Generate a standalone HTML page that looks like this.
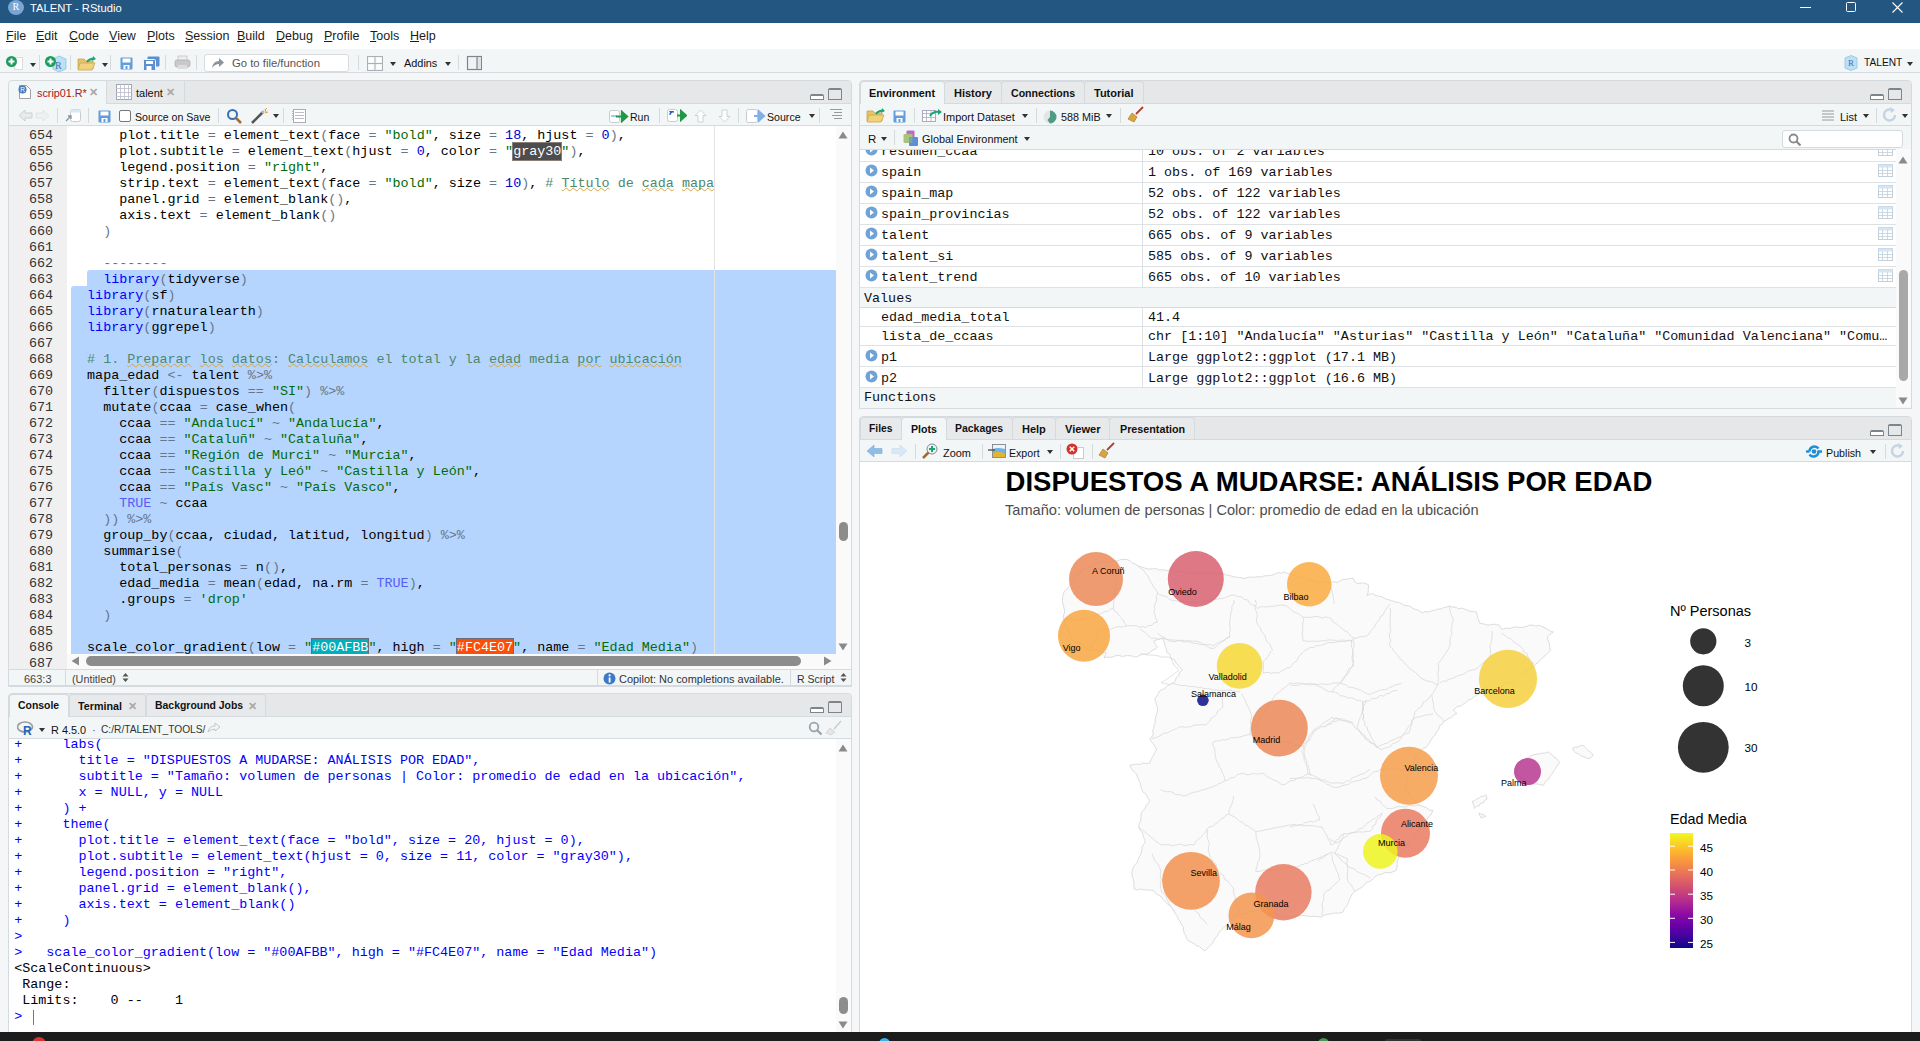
<!DOCTYPE html><html><head><meta charset="utf-8"><style>
*{margin:0;padding:0;box-sizing:border-box}
html,body{width:1920px;height:1041px;overflow:hidden;background:#f4f6f7;font-family:"Liberation Sans",sans-serif;font-size:12px;color:#222}
.a{position:absolute}
.t{position:absolute;white-space:pre;line-height:1}
.m{font-family:"Liberation Mono",monospace;font-size:13.4px}
.ln{position:absolute;white-space:pre;height:16px;line-height:16px;margin-top:2px;font-family:"Liberation Mono",monospace;font-size:13.4px}
.sep{position:absolute;width:1px;background:#d4dadd}
.car{position:absolute;width:0;height:0;border-left:3.5px solid transparent;border-right:3.5px solid transparent;border-top:4px solid #333}
.tab{position:absolute;top:0;height:23px;border:1px solid #d6dadc;border-bottom:none;border-radius:4px 4px 0 0;background:#e8e9eb;font-weight:bold;font-size:12px;line-height:22px;padding-left:9px;color:#111}
.tab.act{background:#f2f6f7}
.x{color:#a8a8a8;font-weight:bold;font-size:11px}
</style></head><body>
<div class="a" style="left:0;top:0;width:1920px;height:23px;background:#235680"></div>
<div class="a" style="left:8px;top:0px;width:16px;height:15px;border-radius:50%;background:#79a6d5"></div>
<div class="t" style="left:12.5px;top:2px;font-family:'Liberation Serif',serif;font-size:10px;color:#fff">R</div>
<div class="t" style="left:30px;top:2.5px;font-size:11.2px;color:#fff">TALENT - RStudio</div>
<div class="a" style="left:1800px;top:7px;width:11px;height:1px;background:#fff"></div>
<div class="a" style="left:1846px;top:2px;width:10px;height:10px;border:1px solid #fff;border-radius:1.5px"></div>
<svg class="a" style="left:1891.5px;top:2px" width="11" height="11"><path d="M0.5 0.5L10.5 10.5M10.5 0.5L0.5 10.5" stroke="#fff" stroke-width="1.1"/></svg>
<div class="a" style="left:0;top:23px;width:1920px;height:26px;background:#fff"></div>
<div class="t" style="left:6px;top:30px;font-size:12.5px;color:#1b1b1b"><u style="text-underline-offset:1px">F</u>ile</div>
<div class="t" style="left:36px;top:30px;font-size:12.5px;color:#1b1b1b"><u style="text-underline-offset:1px">E</u>dit</div>
<div class="t" style="left:69px;top:30px;font-size:12.5px;color:#1b1b1b"><u style="text-underline-offset:1px">C</u>ode</div>
<div class="t" style="left:109px;top:30px;font-size:12.5px;color:#1b1b1b"><u style="text-underline-offset:1px">V</u>iew</div>
<div class="t" style="left:147px;top:30px;font-size:12.5px;color:#1b1b1b"><u style="text-underline-offset:1px">P</u>lots</div>
<div class="t" style="left:185px;top:30px;font-size:12.5px;color:#1b1b1b"><u style="text-underline-offset:1px">S</u>ession</div>
<div class="t" style="left:237px;top:30px;font-size:12.5px;color:#1b1b1b"><u style="text-underline-offset:1px">B</u>uild</div>
<div class="t" style="left:276px;top:30px;font-size:12.5px;color:#1b1b1b"><u style="text-underline-offset:1px">D</u>ebug</div>
<div class="t" style="left:324px;top:30px;font-size:12.5px;color:#1b1b1b"><u style="text-underline-offset:1px">P</u>rofile</div>
<div class="t" style="left:370px;top:30px;font-size:12.5px;color:#1b1b1b"><u style="text-underline-offset:1px">T</u>ools</div>
<div class="t" style="left:410px;top:30px;font-size:12.5px;color:#1b1b1b"><u style="text-underline-offset:1px">H</u>elp</div>
<div class="a" style="left:0;top:49px;width:1920px;height:23px;background:#f3f6f7"></div>
<div class="a" style="left:0;top:72px;width:1920px;height:1px;background:#d4dadd"></div>
<svg class="a" style="left:6px;top:55px;" width="18" height="16" viewBox="0 0 18 16"><rect x="8.5" y="2.5" width="8" height="12" fill="#fff" stroke="#ddd"/><circle cx="5.5" cy="6.5" r="5.5" fill="#1a9e5c"/><path d="M2.5 6.5H8.5M5.5 3.5V9.5" stroke="#fff" stroke-width="2"/></svg>
<div class="car" style="left:30px;top:63px;border-top-color:#333"></div>
<div class="sep" style="left:39px;top:55px;height:15px"></div>
<svg class="a" style="left:45px;top:55px;" width="22" height="17" viewBox="0 0 22 17"><path d="M8 4l6-3 7 3v10l-7 3-6-3z" fill="#bfe0f2" stroke="#7cc0e4" stroke-width="0.7"/><text x="10" y="14" font-family="Liberation Serif" font-size="10" fill="#3b73b9">R</text><circle cx="5.5" cy="6.5" r="5.5" fill="#1a9e5c"/><path d="M2.5 6.5H8.5M5.5 3.5V9.5" stroke="#fff" stroke-width="2"/></svg>
<div class="sep" style="left:70px;top:55px;height:15px"></div>
<svg class="a" style="left:77px;top:55px;" width="20" height="16" viewBox="0 0 20 16"><path d="M1 4h6l2 2h7v8H1z" fill="#e3c46a" stroke="#c9a646" stroke-width="0.8"/><path d="M3 8h15l-3 7H1z" fill="#f0d27c" stroke="#c9a646" stroke-width="0.8"/><path d="M10 7q3-4 7-3" stroke="#1aa575" stroke-width="2" fill="none"/><path d="M16 1l3 3-4 2z" fill="#1aa575"/></svg>
<div class="car" style="left:102px;top:63px;border-top-color:#333"></div>
<div class="sep" style="left:110px;top:55px;height:15px"></div>
<svg class="a" style="left:120px;top:57px;" width="13" height="13" viewBox="0 0 13 13"><rect x="0.5" y="0.5" width="12" height="12" rx="1" fill="#639cdc"/><rect x="2.5" y="1.5" width="8" height="4" fill="#fff"/><rect x="3.5" y="8" width="6" height="4" fill="#fff"/><rect x="5.5" y="9" width="2" height="3" fill="#639cdc"/></svg>
<svg class="a" style="left:143px;top:56px;" width="17" height="15" viewBox="0 0 17 15"><rect x="4.5" y="0.5" width="12" height="10" rx="1" fill="#5b8fd0"/><rect x="0.5" y="3.5" width="12" height="11" rx="1" fill="#5b8fd0" stroke="#f4f6f7" stroke-width="1"/><rect x="3" y="5" width="7" height="3" fill="#fff"/><rect x="3.5" y="10" width="5" height="4" fill="#fff"/></svg>
<div class="sep" style="left:165px;top:55px;height:15px"></div>
<svg class="a" style="left:174px;top:55px;" width="17" height="15" viewBox="0 0 17 15"><rect x="4" y="1" width="9" height="5" fill="#eee" stroke="#bbb" stroke-width="0.7"/><rect x="1" y="5" width="15" height="7" rx="2" fill="#c9c9c9" stroke="#aaa" stroke-width="0.7"/><rect x="4" y="10" width="9" height="4" fill="#ddd"/></svg>
<div class="sep" style="left:196px;top:55px;height:15px"></div>
<div class="a" style="left:204px;top:54px;width:145px;height:18px;background:#fff;border:1px solid #d8dcdf;border-radius:3px"></div>
<svg class="a" style="left:211px;top:57px;" width="14" height="12" viewBox="0 0 14 12"><path d="M1 11q1-7 7-7V1l5 4.5-5 4.5V7q-4 0-7 4z" fill="#8a949c"/></svg>
<div class="t" style="left:232px;top:57.5px;font-size:11.3px;color:#555">Go to file/function</div>
<div class="sep" style="left:358px;top:55px;height:15px"></div>
<svg class="a" style="left:367px;top:56px;" width="16" height="15" viewBox="0 0 16 15"><rect x="0.5" y="0.5" width="15" height="14" fill="none" stroke="#aab0b5"/><path d="M8 0.5V14.5M0.5 7.5H15.5" stroke="#aab0b5"/><rect x="2" y="2" width="4.5" height="4" fill="#fff"/><rect x="9.5" y="2" width="4.5" height="4" fill="#fff"/><rect x="2" y="9" width="4.5" height="4" fill="#fff"/><rect x="9.5" y="9" width="4.5" height="4" fill="#fff"/></svg>
<div class="car" style="left:390px;top:62px;border-top-color:#333"></div>
<div class="t" style="left:404px;top:57.5px;font-size:10.9px;color:#111">Addins</div>
<div class="car" style="left:445px;top:62px;border-top-color:#333"></div>
<div class="sep" style="left:458px;top:55px;height:15px"></div>
<svg class="a" style="left:466px;top:55px;" width="16" height="16" viewBox="0 0 16 16"><rect x="1.5" y="1.5" width="14" height="13" fill="#f0f2f4" stroke="#7d858b" stroke-width="1.2"/><rect x="11" y="2" width="4" height="12" fill="#dfe3e6"/><path d="M11 1.5V14.5" stroke="#7d858b" stroke-width="1.2"/></svg>
<svg class="a" style="left:1843px;top:55px;" width="16" height="16" viewBox="0 0 16 16"><path d="M2 3l6-2.5 6 2.5v10l-6 2.5-6-2.5z" fill="#bfe0f2" stroke="#7cc0e4" stroke-width="0.7"/><text x="5" y="11" font-family="Liberation Serif" font-size="9" fill="#3b73b9">R</text></svg>
<div class="t" style="left:1864px;top:57.5px;font-size:10.2px;color:#111">TALENT</div>
<div class="car" style="left:1907px;top:62px;border-top-color:#333"></div>
<div class="a" style="left:8px;top:80px;width:844px;height:607px;border:1px solid #d4dadd;border-radius:4px 4px 0 0;background:#f2f6f7"></div>
<div class="a" style="left:9px;top:81px;width:842px;height:23px;background:#e5e7e9;border-radius:4px 4px 0 0"></div>
<div class="a" style="left:9px;top:103px;width:842px;height:1px;background:#d4dadd"></div>
<div class="a" style="left:9px;top:81px;width:98px;height:23px;background:#f2f6f7;border-right:1px solid #d4dadd;border-radius:4px 0 0 0"></div>
<svg class="a" style="left:17px;top:84px;" width="16" height="16" viewBox="0 0 16 16"><path d="M2.5 1.5h7l4 4v9h-11z" fill="#fff" stroke="#8a8a8a" stroke-width="0.8"/><circle cx="5.5" cy="5.5" r="4" fill="#4a78b8"/><text x="3.3" y="8.3" font-family="Liberation Sans" font-size="6.5" fill="#fff">R</text></svg>
<div class="t" style="left:37px;top:88px;font-size:10.8px;color:#a8141b">scrip01.R*</div>
<div class="t x" style="left:89px;top:87px">&#x2715;</div>
<div class="a" style="left:107px;top:81px;width:78px;height:22px;background:#e8e9eb;border-right:1px solid #d4dadd"></div>
<svg class="a" style="left:116px;top:84px;" width="16" height="16" viewBox="0 0 16 16"><rect x="0.5" y="0.5" width="15" height="15" fill="#fff" stroke="#9aa"/><path d="M0 4.5H16M0 8.5H16M0 12.5H16M4.5 0V16M8.5 0V16M12.5 0V16" stroke="#bbc" stroke-width="0.8"/></svg>
<div class="t" style="left:136px;top:88px;font-size:11px;color:#111">talent</div>
<div class="t x" style="left:166px;top:87px">&#x2715;</div>
<div class="a" style="left:810px;top:94px;width:14px;height:6px;border:1.5px solid #7d858b;border-top-width:2.5px;border-radius:2px 2px 0 0;background:#fff"></div>
<div class="a" style="left:828px;top:88px;width:14px;height:12px;border:1.2px solid #7d858b;border-top-width:2.5px;border-radius:2px 2px 0 0"></div>
<div class="a" style="left:9px;top:125px;width:842px;height:1px;background:#d4dadd"></div>
<svg class="a" style="left:18px;top:109px;" width="32" height="13" viewBox="0 0 32 13"><path d="M1 6.5L7 1v3h7v5H7v3z" fill="#e8eaec" stroke="#c4c8cc" stroke-width="0.8"/><path d="M31 6.5L25 1v3h-7v5h7v3z" fill="#eef0f2" stroke="#dde0e3" stroke-width="0.8"/></svg>
<div class="sep" style="left:57px;top:108px;height:15px"></div>
<svg class="a" style="left:65px;top:109px;" width="16" height="14" viewBox="0 0 16 14"><rect x="5.5" y="0.5" width="10" height="12" rx="2" fill="#fff" stroke="#c8ccd0"/><rect x="5.5" y="0.5" width="10" height="3" fill="#d9e8f5"/><path d="M1 12l5-5M3 7h3v3" stroke="#8a949c" stroke-width="1.3" fill="none"/></svg>
<div class="sep" style="left:88px;top:108px;height:15px"></div>
<svg class="a" style="left:98px;top:110px;" width="13" height="13" viewBox="0 0 13 13"><rect x="0.5" y="0.5" width="12" height="12" rx="1" fill="#639cdc"/><rect x="2.5" y="1.5" width="8" height="4" fill="#fff"/><rect x="3.5" y="8" width="6" height="4" fill="#fff"/><rect x="5.5" y="9" width="2" height="3" fill="#639cdc"/></svg>
<div class="a" style="left:119px;top:110px;width:12px;height:12px;border:1px solid #777;border-radius:2px;background:#fff"></div>
<div class="t" style="left:135px;top:111.5px;font-size:10.6px;color:#111">Source on Save</div>
<div class="sep" style="left:218px;top:108px;height:15px"></div>
<svg class="a" style="left:226px;top:108px;" width="17" height="16" viewBox="0 0 17 16"><circle cx="6.5" cy="6.5" r="4.5" fill="none" stroke="#3d6fb5" stroke-width="2"/><path d="M10 10l5 5" stroke="#a46a2a" stroke-width="2.5"/></svg>
<svg class="a" style="left:250px;top:108px;" width="20" height="16" viewBox="0 0 20 16"><path d="M2 15l11-11" stroke="#555" stroke-width="2.5"/><path d="M12 5l2-2" stroke="#bbb" stroke-width="2.5"/><path d="M15 1l1 3M18 4l-3 1M17 0l-2 2" stroke="#e89a2c" stroke-width="1"/></svg>
<div class="car" style="left:273px;top:114px;border-top-color:#333"></div>
<div class="sep" style="left:283px;top:108px;height:15px"></div>
<svg class="a" style="left:292px;top:109px;" width="14" height="14" viewBox="0 0 14 14"><rect x="1.5" y="0.5" width="12" height="13" fill="#fff" stroke="#aab"/><path d="M3 3.5h9M3 6.5h9M3 9.5h9" stroke="#aab" stroke-width="0.8"/><path d="M0 2v10" stroke="#889" stroke-width="1" stroke-dasharray="1 1"/></svg>
<svg class="a" style="left:609px;top:110px;" width="20" height="13" viewBox="0 0 20 13"><rect x="0.5" y="0.5" width="10" height="12" rx="2" fill="#fff" stroke="#c8ccd0"/><rect x="2" y="5" width="6" height="2" fill="#a8c8ea"/><path d="M7 6.5h7M13 2l5 4.5-5 4.5z" stroke="#1c9a46" stroke-width="2.2" fill="#1c9a46"/></svg>
<div class="t" style="left:630px;top:111.5px;font-size:10.5px;color:#111">Run</div>
<div class="sep" style="left:659px;top:108px;height:15px"></div>
<svg class="a" style="left:667px;top:109px;" width="20" height="13" viewBox="0 0 20 13"><rect x="0.5" y="0.5" width="10" height="12" rx="2" fill="#fff" stroke="#c8ccd0"/><path d="M3 6q0-4 4-3" stroke="#2a5fc0" stroke-width="1.4" fill="none"/><path d="M2 2l2 3 2-3z" fill="#2a5fc0"/><path d="M10 6.5h5M14 2l5 4.5-5 4.5z" stroke="#1c9a46" stroke-width="2" fill="#1c9a46"/></svg>
<svg class="a" style="left:694px;top:109px;" width="13" height="14" viewBox="0 0 13 14"><path d="M6.5 1L12 6.5H9V13H4V6.5H1z" fill="#fff" stroke="#c4c8cc" stroke-width="0.8"/></svg>
<svg class="a" style="left:718px;top:109px;" width="13" height="14" viewBox="0 0 13 14"><path d="M6.5 13L12 7.5H9V1H4v6.5H1z" fill="#fff" stroke="#c4c8cc" stroke-width="0.8"/></svg>
<div class="sep" style="left:738px;top:108px;height:15px"></div>
<svg class="a" style="left:746px;top:109px;" width="20" height="14" viewBox="0 0 20 14"><rect x="0.5" y="0.5" width="11" height="13" rx="2" fill="#fff" stroke="#c8ccd0"/><path d="M8 7h6M13 2.5l5 4.5-5 4.5z" stroke="#7fb0e6" stroke-width="2.2" fill="#7fb0e6"/></svg>
<div class="t" style="left:767px;top:111.5px;font-size:10.6px;color:#111">Source</div>
<div class="car" style="left:809px;top:114px;border-top-color:#333"></div>
<div class="sep" style="left:819px;top:108px;height:15px"></div>
<svg class="a" style="left:830px;top:108px;" width="12" height="12" viewBox="0 0 12 12"><path d="M0 1.5h12M4 4.5h8M2 7.5h10M4 10.5h8" stroke="#999" stroke-width="1"/></svg>
<div class="a" style="left:9px;top:126px;width:58px;height:543px;background:#f0f0f0"></div>
<div class="a" style="left:67px;top:126px;width:769px;height:543px;background:#fff;overflow:hidden">
<div class="a" style="left:20px;top:144px;width:800px;height:16px;background:#b5d5ff;border-radius:3px 0 0 0"></div>
<div class="a" style="left:4px;top:160px;width:800px;height:368px;background:#b5d5ff;border-radius:3px 0 0 0"></div>
<div class="a" style="left:647px;top:0;width:1px;height:528px;background:#e3e3e3"></div>
<div class="ln" style="left:4px;top:0px;color:#000">      <span style="color:#000000">plot.title</span> <span style="color:#687687">=</span> <span style="color:#000000">element_text</span><span style="color:#687687">(</span><span style="color:#000000">face</span> <span style="color:#687687">=</span> <span style="color:#036a07">"bold"</span>, <span style="color:#000000">size</span> <span style="color:#687687">=</span> <span style="color:#0000cd">18</span>, <span style="color:#000000">hjust</span> <span style="color:#687687">=</span> <span style="color:#0000cd">0</span><span style="color:#687687">)</span>,</div>
<div class="ln" style="left:4px;top:16px;color:#000">      <span style="color:#000000">plot.subtitle</span> <span style="color:#687687">=</span> <span style="color:#000000">element_text</span><span style="color:#687687">(</span><span style="color:#000000">hjust</span> <span style="color:#687687">=</span> <span style="color:#0000cd">0</span>, <span style="color:#000000">color</span> <span style="color:#687687">=</span> <span style="color:#036a07">"</span><span style="background:#4d4d4d;color:#fff;box-shadow:0 0 0 1px rgba(40,20,10,.55);padding:1px 0">gray30</span><span style="color:#036a07">"</span><span style="color:#687687">)</span>,</div>
<div class="ln" style="left:4px;top:32px;color:#000">      <span style="color:#000000">legend.position</span> <span style="color:#687687">=</span> <span style="color:#036a07">"right"</span>,</div>
<div class="ln" style="left:4px;top:48px;color:#000">      <span style="color:#000000">strip.text</span> <span style="color:#687687">=</span> <span style="color:#000000">element_text</span><span style="color:#687687">(</span><span style="color:#000000">face</span> <span style="color:#687687">=</span> <span style="color:#036a07">"bold"</span>, <span style="color:#000000">size</span> <span style="color:#687687">=</span> <span style="color:#0000cd">10</span><span style="color:#687687">)</span>, <span style="color:#4c886b"># <span style="text-decoration:underline wavy #d7a442;text-decoration-thickness:1px;text-underline-offset:0px;text-decoration-skip-ink:none">Título</span> de <span style="text-decoration:underline wavy #d7a442;text-decoration-thickness:1px;text-underline-offset:0px;text-decoration-skip-ink:none">cada</span> <span style="text-decoration:underline wavy #d7a442;text-decoration-thickness:1px;text-underline-offset:0px;text-decoration-skip-ink:none">mapa</span></span></div>
<div class="ln" style="left:4px;top:64px;color:#000">      <span style="color:#000000">panel.grid</span> <span style="color:#687687">=</span> <span style="color:#000000">element_blank</span><span style="color:#687687">(</span><span style="color:#687687">)</span>,</div>
<div class="ln" style="left:4px;top:80px;color:#000">      <span style="color:#000000">axis.text</span> <span style="color:#687687">=</span> <span style="color:#000000">element_blank</span><span style="color:#687687">(</span><span style="color:#687687">)</span></div>
<div class="ln" style="left:4px;top:96px;color:#000">    <span style="color:#687687">)</span></div>
<div class="ln" style="left:4px;top:112px;color:#000"></div>
<div class="ln" style="left:4px;top:128px;color:#000">    <span style="color:#687687">--------</span></div>
<div class="ln" style="left:4px;top:144px;color:#000">    <span style="color:#0000ff">library</span><span style="color:#687687">(</span><span style="color:#000000">tidyverse</span><span style="color:#687687">)</span></div>
<div class="ln" style="left:4px;top:160px;color:#000">  <span style="color:#0000ff">library</span><span style="color:#687687">(</span><span style="color:#000000">sf</span><span style="color:#687687">)</span></div>
<div class="ln" style="left:4px;top:176px;color:#000">  <span style="color:#0000ff">library</span><span style="color:#687687">(</span><span style="color:#000000">rnaturalearth</span><span style="color:#687687">)</span></div>
<div class="ln" style="left:4px;top:192px;color:#000">  <span style="color:#0000ff">library</span><span style="color:#687687">(</span><span style="color:#000000">ggrepel</span><span style="color:#687687">)</span></div>
<div class="ln" style="left:4px;top:208px;color:#000"></div>
<div class="ln" style="left:4px;top:224px;color:#000">  <span style="color:#4c886b"># 1. <span style="text-decoration:underline wavy #d7a442;text-decoration-thickness:1px;text-underline-offset:0px;text-decoration-skip-ink:none">Preparar</span> <span style="text-decoration:underline wavy #d7a442;text-decoration-thickness:1px;text-underline-offset:0px;text-decoration-skip-ink:none">los</span> <span style="text-decoration:underline wavy #d7a442;text-decoration-thickness:1px;text-underline-offset:0px;text-decoration-skip-ink:none">datos</span>: <span style="text-decoration:underline wavy #d7a442;text-decoration-thickness:1px;text-underline-offset:0px;text-decoration-skip-ink:none">Calculamos</span> el total y la <span style="text-decoration:underline wavy #d7a442;text-decoration-thickness:1px;text-underline-offset:0px;text-decoration-skip-ink:none">edad</span> media <span style="text-decoration:underline wavy #d7a442;text-decoration-thickness:1px;text-underline-offset:0px;text-decoration-skip-ink:none">por</span> <span style="text-decoration:underline wavy #d7a442;text-decoration-thickness:1px;text-underline-offset:0px;text-decoration-skip-ink:none">ubicación</span></span></div>
<div class="ln" style="left:4px;top:240px;color:#000">  <span style="color:#000000">mapa_edad</span> <span style="color:#687687">&lt;-</span> <span style="color:#000000">talent</span> <span style="color:#687687">%&gt;%</span></div>
<div class="ln" style="left:4px;top:256px;color:#000">    <span style="color:#000000">filter</span><span style="color:#687687">(</span><span style="color:#000000">dispuestos</span> <span style="color:#687687">==</span> <span style="color:#036a07">"SI"</span><span style="color:#687687">)</span> <span style="color:#687687">%&gt;%</span></div>
<div class="ln" style="left:4px;top:272px;color:#000">    <span style="color:#000000">mutate</span><span style="color:#687687">(</span><span style="color:#000000">ccaa</span> <span style="color:#687687">=</span> <span style="color:#000000">case_when</span><span style="color:#687687">(</span></div>
<div class="ln" style="left:4px;top:288px;color:#000">      <span style="color:#000000">ccaa</span> <span style="color:#687687">==</span> <span style="color:#036a07">"Andalucí"</span> <span style="color:#687687">~</span> <span style="color:#036a07">"Andalucía"</span>,</div>
<div class="ln" style="left:4px;top:304px;color:#000">      <span style="color:#000000">ccaa</span> <span style="color:#687687">==</span> <span style="color:#036a07">"Cataluñ"</span> <span style="color:#687687">~</span> <span style="color:#036a07">"Cataluña"</span>,</div>
<div class="ln" style="left:4px;top:320px;color:#000">      <span style="color:#000000">ccaa</span> <span style="color:#687687">==</span> <span style="color:#036a07">"Región de Murci"</span> <span style="color:#687687">~</span> <span style="color:#036a07">"Murcia"</span>,</div>
<div class="ln" style="left:4px;top:336px;color:#000">      <span style="color:#000000">ccaa</span> <span style="color:#687687">==</span> <span style="color:#036a07">"Castilla y Leó"</span> <span style="color:#687687">~</span> <span style="color:#036a07">"Castilla y León"</span>,</div>
<div class="ln" style="left:4px;top:352px;color:#000">      <span style="color:#000000">ccaa</span> <span style="color:#687687">==</span> <span style="color:#036a07">"País Vasc"</span> <span style="color:#687687">~</span> <span style="color:#036a07">"País Vasco"</span>,</div>
<div class="ln" style="left:4px;top:368px;color:#000">      <span style="color:#585cf6">TRUE</span> <span style="color:#687687">~</span> <span style="color:#000000">ccaa</span></div>
<div class="ln" style="left:4px;top:384px;color:#000">    <span style="color:#687687">)</span><span style="color:#687687">)</span> <span style="color:#687687">%&gt;%</span></div>
<div class="ln" style="left:4px;top:400px;color:#000">    <span style="color:#000000">group_by</span><span style="color:#687687">(</span><span style="color:#000000">ccaa</span>, <span style="color:#000000">ciudad</span>, <span style="color:#000000">latitud</span>, <span style="color:#000000">longitud</span><span style="color:#687687">)</span> <span style="color:#687687">%&gt;%</span></div>
<div class="ln" style="left:4px;top:416px;color:#000">    <span style="color:#000000">summarise</span><span style="color:#687687">(</span></div>
<div class="ln" style="left:4px;top:432px;color:#000">      <span style="color:#000000">total_personas</span> <span style="color:#687687">=</span> <span style="color:#000000">n</span><span style="color:#687687">(</span><span style="color:#687687">)</span>,</div>
<div class="ln" style="left:4px;top:448px;color:#000">      <span style="color:#000000">edad_media</span> <span style="color:#687687">=</span> <span style="color:#000000">mean</span><span style="color:#687687">(</span><span style="color:#000000">edad</span>, <span style="color:#000000">na.rm</span> <span style="color:#687687">=</span> <span style="color:#585cf6">TRUE</span><span style="color:#687687">)</span>,</div>
<div class="ln" style="left:4px;top:464px;color:#000">      <span style="color:#000000">.groups</span> <span style="color:#687687">=</span> <span style="color:#036a07">'drop'</span></div>
<div class="ln" style="left:4px;top:480px;color:#000">    <span style="color:#687687">)</span></div>
<div class="ln" style="left:4px;top:496px;color:#000"></div>
<div class="ln" style="left:4px;top:512px;color:#000">  <span style="color:#000000">scale_color_gradient</span><span style="color:#687687">(</span><span style="color:#000000">low</span> <span style="color:#687687">=</span> <span style="color:#036a07">"</span><span style="background:#00afbb;color:#fff;box-shadow:0 0 0 1px rgba(40,20,10,.55);padding:1px 0">#00AFBB</span><span style="color:#036a07">"</span>, <span style="color:#000000">high</span> <span style="color:#687687">=</span> <span style="color:#036a07">"</span><span style="background:#fc4e07;color:#fff;box-shadow:0 0 0 1px rgba(40,20,10,.55);padding:1px 0">#FC4E07</span><span style="color:#036a07">"</span>, <span style="color:#000000">name</span> <span style="color:#687687">=</span> <span style="color:#036a07">"Edad Media"</span><span style="color:#687687">)</span></div>
<div class="ln" style="left:4px;top:528px;color:#000"></div>
</div>
<div class="ln" style="left:0;top:126px;width:53px;text-align:right;color:#333">654</div>
<div class="ln" style="left:0;top:142px;width:53px;text-align:right;color:#333">655</div>
<div class="ln" style="left:0;top:158px;width:53px;text-align:right;color:#333">656</div>
<div class="ln" style="left:0;top:174px;width:53px;text-align:right;color:#333">657</div>
<div class="ln" style="left:0;top:190px;width:53px;text-align:right;color:#333">658</div>
<div class="ln" style="left:0;top:206px;width:53px;text-align:right;color:#333">659</div>
<div class="ln" style="left:0;top:222px;width:53px;text-align:right;color:#333">660</div>
<div class="ln" style="left:0;top:238px;width:53px;text-align:right;color:#333">661</div>
<div class="ln" style="left:0;top:254px;width:53px;text-align:right;color:#333">662</div>
<div class="ln" style="left:0;top:270px;width:53px;text-align:right;color:#333">663</div>
<div class="ln" style="left:0;top:286px;width:53px;text-align:right;color:#333">664</div>
<div class="ln" style="left:0;top:302px;width:53px;text-align:right;color:#333">665</div>
<div class="ln" style="left:0;top:318px;width:53px;text-align:right;color:#333">666</div>
<div class="ln" style="left:0;top:334px;width:53px;text-align:right;color:#333">667</div>
<div class="ln" style="left:0;top:350px;width:53px;text-align:right;color:#333">668</div>
<div class="ln" style="left:0;top:366px;width:53px;text-align:right;color:#333">669</div>
<div class="ln" style="left:0;top:382px;width:53px;text-align:right;color:#333">670</div>
<div class="ln" style="left:0;top:398px;width:53px;text-align:right;color:#333">671</div>
<div class="ln" style="left:0;top:414px;width:53px;text-align:right;color:#333">672</div>
<div class="ln" style="left:0;top:430px;width:53px;text-align:right;color:#333">673</div>
<div class="ln" style="left:0;top:446px;width:53px;text-align:right;color:#333">674</div>
<div class="ln" style="left:0;top:462px;width:53px;text-align:right;color:#333">675</div>
<div class="ln" style="left:0;top:478px;width:53px;text-align:right;color:#333">676</div>
<div class="ln" style="left:0;top:494px;width:53px;text-align:right;color:#333">677</div>
<div class="ln" style="left:0;top:510px;width:53px;text-align:right;color:#333">678</div>
<div class="ln" style="left:0;top:526px;width:53px;text-align:right;color:#333">679</div>
<div class="ln" style="left:0;top:542px;width:53px;text-align:right;color:#333">680</div>
<div class="ln" style="left:0;top:558px;width:53px;text-align:right;color:#333">681</div>
<div class="ln" style="left:0;top:574px;width:53px;text-align:right;color:#333">682</div>
<div class="ln" style="left:0;top:590px;width:53px;text-align:right;color:#333">683</div>
<div class="ln" style="left:0;top:606px;width:53px;text-align:right;color:#333">684</div>
<div class="ln" style="left:0;top:622px;width:53px;text-align:right;color:#333">685</div>
<div class="ln" style="left:0;top:638px;width:53px;text-align:right;color:#333">686</div>
<div class="ln" style="left:0;top:654px;width:53px;text-align:right;color:#333">687</div>
<div class="a" style="left:836px;top:126px;width:15px;height:528px;background:#fafafa"></div>
<svg class="a" style="left:838px;top:131px;" width="10" height="8" viewBox="0 0 10 8"><path d="M0.5 7.5L5 0.5 9.5 7.5z" fill="#8a8a8a"/></svg>
<div class="a" style="left:839px;top:522px;width:9px;height:19px;border-radius:4.5px;background:#8c8c8c"></div>
<svg class="a" style="left:838px;top:643px;" width="10" height="8" viewBox="0 0 10 8"><path d="M0.5 0.5L5 7.5 9.5 0.5z" fill="#8a8a8a"/></svg>
<div class="a" style="left:67px;top:654px;width:784px;height:15px;background:#fafafa"></div>
<svg class="a" style="left:71px;top:656px;" width="9" height="10" viewBox="0 0 9 10"><path d="M8 0.5L0.5 5 8 9.5z" fill="#8a8a8a"/></svg>
<div class="a" style="left:86px;top:656px;width:715px;height:10px;border-radius:5px;background:#8c8c8c"></div>
<svg class="a" style="left:823px;top:656px;" width="9" height="10" viewBox="0 0 9 10"><path d="M1 0.5L8.5 5 1 9.5z" fill="#8a8a8a"/></svg>
<div class="a" style="left:9px;top:669px;width:842px;height:17px;background:#f2f6f7;border-top:1px solid #d4dadd;border-bottom:1px solid #d4dadd"></div>
<div class="t" style="left:24px;top:673.5px;font-size:11px;color:#444">663:3</div>
<div class="sep" style="left:65px;top:670px;height:15px"></div>
<div class="t" style="left:72px;top:673.5px;font-size:10.8px;color:#444">(Untitled)</div>
<svg class="a" style="left:122px;top:672px;" width="7" height="11" viewBox="0 0 7 11"><path d="M0.5 4.5L3.5 1 6.5 4.5zM0.5 6.5L3.5 10 6.5 6.5z" fill="#555"/></svg>
<div class="sep" style="left:597px;top:670px;height:15px"></div>
<svg class="a" style="left:603px;top:672px;" width="13" height="13" viewBox="0 0 13 13"><circle cx="6.5" cy="6.5" r="6" fill="#3e79c4"/><rect x="5.7" y="5.5" width="1.8" height="5" fill="#fff"/><circle cx="6.6" cy="3.4" r="1.1" fill="#fff"/></svg>
<div class="t" style="left:619px;top:673.5px;font-size:10.95px;color:#333">Copilot: No completions available.</div>
<div class="sep" style="left:790px;top:670px;height:15px"></div>
<div class="t" style="left:797px;top:673.5px;font-size:10.5px;color:#333">R Script</div>
<svg class="a" style="left:840px;top:672px;" width="7" height="11" viewBox="0 0 7 11"><path d="M0.5 4.5L3.5 1 6.5 4.5zM0.5 6.5L3.5 10 6.5 6.5z" fill="#555"/></svg>
<div class="a" style="left:8px;top:693px;width:844px;height:340px;border:1px solid #d4dadd;border-radius:4px 4px 0 0;background:#f2f6f7"></div>
<div class="a" style="left:9px;top:694px;width:842px;height:23px;background:#e5e7e9;border-radius:4px 4px 0 0"></div>
<div class="a" style="left:9px;top:716px;width:842px;height:1px;background:#d4dadd"></div>
<div class="a" style="left:9px;top:694px;width:60px;height:23px;background:#f2f6f7;border:1px solid #d4dadd;border-bottom:none;border-radius:4px 4px 0 0"></div>
<div class="t" style="left:18px;top:701px;font-size:10.45px;font-weight:bold;color:#111">Console</div>
<div class="a" style="left:69px;top:694px;width:77px;height:22px;background:#e8e9eb;border:1px solid #d4dadd;border-bottom:none;border-radius:4px 4px 0 0"></div>
<div class="t" style="left:78px;top:701px;font-size:10.75px;font-weight:bold;color:#111">Terminal</div>
<div class="t x" style="left:128px;top:701px">&#x2715;</div>
<div class="a" style="left:146px;top:694px;width:120px;height:22px;background:#e8e9eb;border:1px solid #d4dadd;border-bottom:none;border-radius:4px 4px 0 0"></div>
<div class="t" style="left:155px;top:701px;font-size:10.45px;font-weight:bold;color:#111">Background Jobs</div>
<div class="t x" style="left:248px;top:701px">&#x2715;</div>
<div class="a" style="left:810px;top:707px;width:14px;height:6px;border:1.5px solid #7d858b;border-top-width:2.5px;border-radius:2px 2px 0 0;background:#fff"></div>
<div class="a" style="left:828px;top:701px;width:14px;height:12px;border:1.2px solid #7d858b;border-top-width:2.5px;border-radius:2px 2px 0 0"></div>
<div class="a" style="left:9px;top:738px;width:842px;height:1px;background:#d4dadd"></div>
<svg class="a" style="left:17px;top:721px;" width="17" height="14" viewBox="0 0 17 14"><ellipse cx="8" cy="6" rx="7.5" ry="5" fill="none" stroke="#9a9a9a" stroke-width="1.6"/><text x="6" y="13.5" font-family="Liberation Sans" font-weight="bold" font-size="12" fill="#2165b6">R</text></svg>
<div class="car" style="left:39px;top:728px;border-top-color:#333"></div>
<div class="t" style="left:51px;top:724.5px;font-size:10.9px;color:#111">R 4.5.0</div>
<div class="t" style="left:92px;top:724.5px;font-size:11.5px;color:#555">·</div>
<div class="t" style="left:101px;top:724.5px;font-size:10.2px;color:#333">C:/R/TALENT_TOOLS/</div>
<svg class="a" style="left:207px;top:722px;" width="14" height="11" viewBox="0 0 14 11"><path d="M1 10q1-6 7-6V1l5 4-5 4V7q-4 0-7 3z" fill="none" stroke="#c4c8cc" stroke-width="1"/></svg>
<svg class="a" style="left:808px;top:721px;" width="15" height="15" viewBox="0 0 15 15"><circle cx="6" cy="6" r="4.3" fill="none" stroke="#9aa3a9" stroke-width="1.8"/><path d="M9 9l4.5 4.5" stroke="#9aa3a9" stroke-width="2.2"/></svg>
<svg class="a" style="left:825px;top:720px;" width="17" height="16" viewBox="0 0 17 16"><path d="M16 1L9 9" stroke="#c8c8c8" stroke-width="1.2"/><path d="M5 8l5 4-4 3-5-2z" fill="#e6e6e6" stroke="#cfcfcf" stroke-width="0.8"/></svg>
<div class="a" style="left:9px;top:739px;width:827px;height:293px;background:#fff;overflow:hidden">
<div class="ln" style="left:5.2px;top:-4px;color:#0000ff">+     labs(</div>
<div class="ln" style="left:5.2px;top:12px;color:#0000ff">+       title = "DISPUESTOS A MUDARSE: ANÁLISIS POR EDAD",</div>
<div class="ln" style="left:5.2px;top:28px;color:#0000ff">+       subtitle = "Tamaño: volumen de personas | Color: promedio de edad en la ubicación",</div>
<div class="ln" style="left:5.2px;top:44px;color:#0000ff">+       x = NULL, y = NULL</div>
<div class="ln" style="left:5.2px;top:60px;color:#0000ff">+     ) +</div>
<div class="ln" style="left:5.2px;top:76px;color:#0000ff">+     theme(</div>
<div class="ln" style="left:5.2px;top:92px;color:#0000ff">+       plot.title = element_text(face = "bold", size = 20, hjust = 0),</div>
<div class="ln" style="left:5.2px;top:108px;color:#0000ff">+       plot.subtitle = element_text(hjust = 0, size = 11, color = "gray30"),</div>
<div class="ln" style="left:5.2px;top:124px;color:#0000ff">+       legend.position = "right",</div>
<div class="ln" style="left:5.2px;top:140px;color:#0000ff">+       panel.grid = element_blank(),</div>
<div class="ln" style="left:5.2px;top:156px;color:#0000ff">+       axis.text = element_blank()</div>
<div class="ln" style="left:5.2px;top:172px;color:#0000ff">+     )</div>
<div class="ln" style="left:5.2px;top:188px;color:#0000ff">&gt; </div>
<div class="ln" style="left:5.2px;top:204px;color:#0000ff">&gt;   scale_color_gradient(low = "#00AFBB", high = "#FC4E07", name = "Edad Media")</div>
<div class="ln" style="left:5.2px;top:220px;color:#000">&lt;ScaleContinuous&gt;</div>
<div class="ln" style="left:5.2px;top:236px;color:#000"> Range:  </div>
<div class="ln" style="left:5.2px;top:252px;color:#000"> Limits:    0 --    1</div>
<div class="ln" style="left:5.2px;top:268px;color:#0000ff">&gt; </div>
<div class="a" style="left:24px;top:271px;width:1px;height:15px;background:#777"></div>
</div>
<div class="a" style="left:836px;top:739px;width:15px;height:293px;background:#fafafa"></div>
<svg class="a" style="left:838px;top:744px;" width="10" height="8" viewBox="0 0 10 8"><path d="M0.5 7.5L5 0.5 9.5 7.5z" fill="#8a8a8a"/></svg>
<div class="a" style="left:839px;top:997px;width:9px;height:17px;border-radius:5px;background:#8c8c8c"></div>
<svg class="a" style="left:838px;top:1021px;" width="10" height="8" viewBox="0 0 10 8"><path d="M0.5 0.5L5 7.5 9.5 0.5z" fill="#8a8a8a"/></svg>
<div class="a" style="left:859px;top:80px;width:1053px;height:329px;border:1px solid #d4dadd;border-radius:4px 4px 0 0;background:#f2f6f7"></div>
<div class="a" style="left:860px;top:81px;width:1051px;height:23px;background:#e5e7e9;border-radius:4px 4px 0 0"></div>
<div class="a" style="left:860px;top:103px;width:1051px;height:1px;background:#d4dadd"></div>
<div class="a" style="left:860px;top:81px;width:85px;height:23px;background:#f2f6f7;border:1px solid #d4dadd;border-bottom:none;border-radius:4px 4px 0 0"></div>
<div class="t" style="left:869px;top:88px;font-size:10.8px;font-weight:bold;color:#111">Environment</div>
<div class="a" style="left:944px;top:81px;width:58px;height:22px;background:#e8e9eb;border:1px solid #d4dadd;border-bottom:none;border-radius:4px 4px 0 0"></div>
<div class="t" style="left:954px;top:88px;font-size:11.0px;font-weight:bold;color:#111">History</div>
<div class="a" style="left:1001px;top:81px;width:84px;height:22px;background:#e8e9eb;border:1px solid #d4dadd;border-bottom:none;border-radius:4px 4px 0 0"></div>
<div class="t" style="left:1011px;top:88px;font-size:10.6px;font-weight:bold;color:#111">Connections</div>
<div class="a" style="left:1084px;top:81px;width:60px;height:22px;background:#e8e9eb;border:1px solid #d4dadd;border-bottom:none;border-radius:4px 4px 0 0"></div>
<div class="t" style="left:1094px;top:88px;font-size:11.0px;font-weight:bold;color:#111">Tutorial</div>
<div class="a" style="left:1870px;top:94px;width:14px;height:6px;border:1.5px solid #7d858b;border-top-width:2.5px;border-radius:2px 2px 0 0;background:#fff"></div>
<div class="a" style="left:1888px;top:88px;width:14px;height:12px;border:1.2px solid #7d858b;border-top-width:2.5px;border-radius:2px 2px 0 0"></div>
<div class="a" style="left:860px;top:125px;width:1051px;height:1px;background:#d4dadd"></div>
<svg class="a" style="left:866px;top:107px;" width="20" height="16" viewBox="0 0 20 16"><path d="M1 4h6l2 2h7v8H1z" fill="#e3c46a" stroke="#c9a646" stroke-width="0.8"/><path d="M3 8h15l-3 7H1z" fill="#f0d27c" stroke="#c9a646" stroke-width="0.8"/><path d="M10 7q3-4 7-3" stroke="#1aa575" stroke-width="2" fill="none"/><path d="M16 1l3 3-4 2z" fill="#1aa575"/></svg>
<svg class="a" style="left:893px;top:110px;" width="13" height="13" viewBox="0 0 13 13"><rect x="0.5" y="0.5" width="12" height="12" rx="1" fill="#639cdc"/><rect x="2.5" y="1.5" width="8" height="4" fill="#fff"/><rect x="3.5" y="8" width="6" height="4" fill="#fff"/><rect x="5.5" y="9" width="2" height="3" fill="#639cdc"/></svg>
<div class="sep" style="left:914px;top:108px;height:15px"></div>
<svg class="a" style="left:922px;top:108px;" width="22" height="15" viewBox="0 0 22 15"><rect x="0.5" y="2.5" width="13" height="11" fill="#fff" stroke="#aab"/><path d="M0 5.5h14M0 9.5h14M4.5 2v12M9 2v12" stroke="#aab" stroke-width="0.8"/><path d="M8 8q3-5 9-4" stroke="#1aa575" stroke-width="2" fill="none"/><path d="M16 1l4 3-4 3z" fill="#1aa575"/></svg>
<div class="t" style="left:943px;top:112px;font-size:10.95px;color:#111">Import Dataset</div>
<div class="car" style="left:1022px;top:114px;border-top-color:#333"></div>
<div class="sep" style="left:1036px;top:108px;height:15px"></div>
<svg class="a" style="left:1043px;top:110px;" width="14" height="14" viewBox="0 0 14 14"><circle cx="7" cy="7" r="6.5" fill="#e4e4e4"/><path d="M7 0.5A6.5 6.5 0 0 1 7 13.5L4.5 10 7 7z" fill="#4f9c86"/></svg>
<div class="t" style="left:1061px;top:112px;font-size:10.8px;color:#111">588 MiB</div>
<div class="car" style="left:1106px;top:114px;border-top-color:#333"></div>
<div class="sep" style="left:1120px;top:108px;height:15px"></div>
<svg class="a" style="left:1127px;top:106px;" width="17" height="17" viewBox="0 0 17 17"><path d="M16 1L9 8" stroke="#b23b2e" stroke-width="1.8"/><path d="M5 7l5 4-3 5-6-3z" fill="#d9a441" stroke="#b8862c" stroke-width="0.8"/></svg>
<svg class="a" style="left:1822px;top:110px;" width="12" height="11" viewBox="0 0 12 11"><path d="M0 1h12M0 4h12M0 7h12M0 10h12" stroke="#999" stroke-width="1"/></svg>
<div class="t" style="left:1840px;top:112px;font-size:11px;color:#111">List</div>
<div class="car" style="left:1863px;top:114px;border-top-color:#333"></div>
<div class="sep" style="left:1876px;top:108px;height:15px"></div>
<svg class="a" style="left:1882px;top:107px;" width="16" height="16" viewBox="0 0 16 16"><path d="M13 8A5.5 5.5 0 1 1 9 2.7" fill="none" stroke="#c5d3e3" stroke-width="2.4"/><path d="M8 0l5 3-4 3z" fill="#c5d3e3"/></svg>
<div class="car" style="left:1902px;top:114px;border-top-color:#333"></div>
<div class="a" style="left:860px;top:149px;width:1051px;height:1px;background:#d4dadd"></div>
<div class="t" style="left:868px;top:133.5px;font-size:11.5px;color:#111">R</div>
<div class="car" style="left:881px;top:137px;border-top-color:#333"></div>
<div class="sep" style="left:894px;top:130px;height:15px"></div>
<svg class="a" style="left:903px;top:130px;" width="16" height="17" viewBox="0 0 16 17"><rect x="3.5" y="0.5" width="8" height="8" rx="1" fill="#b86cc6"/><rect x="0.5" y="4" width="9" height="9" rx="1" fill="#a7c47a"/><rect x="6" y="7" width="9" height="9" rx="1" fill="#5b8fd8"/><rect x="6" y="7" width="3.5" height="6" fill="#7aa3a8"/></svg>
<div class="t" style="left:922px;top:134.2px;font-size:10.9px;color:#111">Global Environment</div>
<div class="car" style="left:1024px;top:137px;border-top-color:#333"></div>
<div class="a" style="left:1782px;top:130px;width:121px;height:18px;background:#fff;border:1px solid #d4dadd;border-radius:3px"></div>
<svg class="a" style="left:1788px;top:133px;" width="14" height="13" viewBox="0 0 14 13"><circle cx="5.5" cy="5.5" r="4" fill="none" stroke="#8a8a8a" stroke-width="1.8"/><path d="M8.5 8.5l4 4" stroke="#8a8a8a" stroke-width="2.2"/></svg>
<div class="a" style="left:860px;top:150px;width:1036px;height:257px;background:#fff;overflow:hidden">
<div class="a" style="left:0;top:-9px;width:1036px;height:21px;border-bottom:1px solid #dfe2e5"></div>
<div class="a" style="left:282px;top:-9px;width:1px;height:21px;background:#dfe2e5"></div>
<svg class="a" style="left:5px;top:-7px;" width="13" height="13" viewBox="0 0 13 13"><circle cx="6.5" cy="6.5" r="6" fill="#6fa3d8"/><path d="M5 3.5L9 6.5 5 9.5z" fill="#fff"/></svg>
<div class="ln" style="left:21px;top:-8px;color:#111">resumen_ccaa</div>
<div class="ln" style="left:288px;top:-8px;color:#111">10 obs. of 2 variables</div>
<svg class="a" style="left:1018px;top:-7px;" width="15" height="14" viewBox="0 0 15 14"><rect x="0.5" y="0.5" width="14" height="12" fill="#fff" stroke="#c3cfdb"/><rect x="0.5" y="0.5" width="14" height="3" fill="#d3e6f5"/><path d="M0 6.5h15M0 9.5h15M4.5 3v10M9.5 3v10" stroke="#c3cfdb" stroke-width="0.8"/></svg>
<div class="a" style="left:0;top:12px;width:1036px;height:21px;border-bottom:1px solid #dfe2e5"></div>
<div class="a" style="left:282px;top:12px;width:1px;height:21px;background:#dfe2e5"></div>
<svg class="a" style="left:5px;top:14px;" width="13" height="13" viewBox="0 0 13 13"><circle cx="6.5" cy="6.5" r="6" fill="#6fa3d8"/><path d="M5 3.5L9 6.5 5 9.5z" fill="#fff"/></svg>
<div class="ln" style="left:21px;top:13px;color:#111">spain</div>
<div class="ln" style="left:288px;top:13px;color:#111">1 obs. of 169 variables</div>
<svg class="a" style="left:1018px;top:14px;" width="15" height="14" viewBox="0 0 15 14"><rect x="0.5" y="0.5" width="14" height="12" fill="#fff" stroke="#c3cfdb"/><rect x="0.5" y="0.5" width="14" height="3" fill="#d3e6f5"/><path d="M0 6.5h15M0 9.5h15M4.5 3v10M9.5 3v10" stroke="#c3cfdb" stroke-width="0.8"/></svg>
<div class="a" style="left:0;top:33px;width:1036px;height:21px;border-bottom:1px solid #dfe2e5"></div>
<div class="a" style="left:282px;top:33px;width:1px;height:21px;background:#dfe2e5"></div>
<svg class="a" style="left:5px;top:35px;" width="13" height="13" viewBox="0 0 13 13"><circle cx="6.5" cy="6.5" r="6" fill="#6fa3d8"/><path d="M5 3.5L9 6.5 5 9.5z" fill="#fff"/></svg>
<div class="ln" style="left:21px;top:34px;color:#111">spain_map</div>
<div class="ln" style="left:288px;top:34px;color:#111">52 obs. of 122 variables</div>
<svg class="a" style="left:1018px;top:35px;" width="15" height="14" viewBox="0 0 15 14"><rect x="0.5" y="0.5" width="14" height="12" fill="#fff" stroke="#c3cfdb"/><rect x="0.5" y="0.5" width="14" height="3" fill="#d3e6f5"/><path d="M0 6.5h15M0 9.5h15M4.5 3v10M9.5 3v10" stroke="#c3cfdb" stroke-width="0.8"/></svg>
<div class="a" style="left:0;top:54px;width:1036px;height:21px;border-bottom:1px solid #dfe2e5"></div>
<div class="a" style="left:282px;top:54px;width:1px;height:21px;background:#dfe2e5"></div>
<svg class="a" style="left:5px;top:56px;" width="13" height="13" viewBox="0 0 13 13"><circle cx="6.5" cy="6.5" r="6" fill="#6fa3d8"/><path d="M5 3.5L9 6.5 5 9.5z" fill="#fff"/></svg>
<div class="ln" style="left:21px;top:55px;color:#111">spain_provincias</div>
<div class="ln" style="left:288px;top:55px;color:#111">52 obs. of 122 variables</div>
<svg class="a" style="left:1018px;top:56px;" width="15" height="14" viewBox="0 0 15 14"><rect x="0.5" y="0.5" width="14" height="12" fill="#fff" stroke="#c3cfdb"/><rect x="0.5" y="0.5" width="14" height="3" fill="#d3e6f5"/><path d="M0 6.5h15M0 9.5h15M4.5 3v10M9.5 3v10" stroke="#c3cfdb" stroke-width="0.8"/></svg>
<div class="a" style="left:0;top:75px;width:1036px;height:21px;border-bottom:1px solid #dfe2e5"></div>
<div class="a" style="left:282px;top:75px;width:1px;height:21px;background:#dfe2e5"></div>
<svg class="a" style="left:5px;top:77px;" width="13" height="13" viewBox="0 0 13 13"><circle cx="6.5" cy="6.5" r="6" fill="#6fa3d8"/><path d="M5 3.5L9 6.5 5 9.5z" fill="#fff"/></svg>
<div class="ln" style="left:21px;top:76px;color:#111">talent</div>
<div class="ln" style="left:288px;top:76px;color:#111">665 obs. of 9 variables</div>
<svg class="a" style="left:1018px;top:77px;" width="15" height="14" viewBox="0 0 15 14"><rect x="0.5" y="0.5" width="14" height="12" fill="#fff" stroke="#c3cfdb"/><rect x="0.5" y="0.5" width="14" height="3" fill="#d3e6f5"/><path d="M0 6.5h15M0 9.5h15M4.5 3v10M9.5 3v10" stroke="#c3cfdb" stroke-width="0.8"/></svg>
<div class="a" style="left:0;top:96px;width:1036px;height:21px;border-bottom:1px solid #dfe2e5"></div>
<div class="a" style="left:282px;top:96px;width:1px;height:21px;background:#dfe2e5"></div>
<svg class="a" style="left:5px;top:98px;" width="13" height="13" viewBox="0 0 13 13"><circle cx="6.5" cy="6.5" r="6" fill="#6fa3d8"/><path d="M5 3.5L9 6.5 5 9.5z" fill="#fff"/></svg>
<div class="ln" style="left:21px;top:97px;color:#111">talent_si</div>
<div class="ln" style="left:288px;top:97px;color:#111">585 obs. of 9 variables</div>
<svg class="a" style="left:1018px;top:98px;" width="15" height="14" viewBox="0 0 15 14"><rect x="0.5" y="0.5" width="14" height="12" fill="#fff" stroke="#c3cfdb"/><rect x="0.5" y="0.5" width="14" height="3" fill="#d3e6f5"/><path d="M0 6.5h15M0 9.5h15M4.5 3v10M9.5 3v10" stroke="#c3cfdb" stroke-width="0.8"/></svg>
<div class="a" style="left:0;top:117px;width:1036px;height:21px;border-bottom:1px solid #dfe2e5"></div>
<div class="a" style="left:282px;top:117px;width:1px;height:21px;background:#dfe2e5"></div>
<svg class="a" style="left:5px;top:119px;" width="13" height="13" viewBox="0 0 13 13"><circle cx="6.5" cy="6.5" r="6" fill="#6fa3d8"/><path d="M5 3.5L9 6.5 5 9.5z" fill="#fff"/></svg>
<div class="ln" style="left:21px;top:118px;color:#111">talent_trend</div>
<div class="ln" style="left:288px;top:118px;color:#111">665 obs. of 10 variables</div>
<svg class="a" style="left:1018px;top:119px;" width="15" height="14" viewBox="0 0 15 14"><rect x="0.5" y="0.5" width="14" height="12" fill="#fff" stroke="#c3cfdb"/><rect x="0.5" y="0.5" width="14" height="3" fill="#d3e6f5"/><path d="M0 6.5h15M0 9.5h15M4.5 3v10M9.5 3v10" stroke="#c3cfdb" stroke-width="0.8"/></svg>
<div class="a" style="left:0;top:138px;width:1036px;height:20px;background:#f2f6f7;border-bottom:1px solid #d4dadd"></div>
<div class="ln" style="left:4px;top:138.5px;color:#111">Values</div>
<div class="a" style="left:0;top:158px;width:1036px;height:18.5px;border-bottom:1px solid #dfe2e5"></div>
<div class="a" style="left:282px;top:158px;width:1px;height:18.5px;background:#dfe2e5"></div>
<div class="ln" style="left:21px;top:158px;color:#111">edad_media_total</div>
<div class="ln" style="left:288px;top:158px;color:#111">41.4</div>
<div class="a" style="left:0;top:176.5px;width:1036px;height:19.0px;border-bottom:1px solid #dfe2e5"></div>
<div class="a" style="left:282px;top:176.5px;width:1px;height:19.0px;background:#dfe2e5"></div>
<div class="ln" style="left:21px;top:176.5px;color:#111">lista_de_ccaas</div>
<div class="ln" style="left:288px;top:176.5px;color:#111">chr [1:10] "Andalucía" "Asturias" "Castilla y León" "Cataluña" "Comunidad Valenciana" "Comu…</div>
<div class="a" style="left:0;top:195.5px;width:1036px;height:21.0px;border-bottom:1px solid #dfe2e5"></div>
<div class="a" style="left:282px;top:195.5px;width:1px;height:21.0px;background:#dfe2e5"></div>
<svg class="a" style="left:5px;top:199.0px;" width="13" height="13" viewBox="0 0 13 13"><circle cx="6.5" cy="6.5" r="6" fill="#6fa3d8"/><path d="M5 3.5L9 6.5 5 9.5z" fill="#fff"/></svg>
<div class="ln" style="left:21px;top:198.0px;color:#111">p1</div>
<div class="ln" style="left:288px;top:198.0px;color:#111">Large ggplot2::ggplot (17.1 MB)</div>
<div class="a" style="left:0;top:216.5px;width:1036px;height:21.0px;border-bottom:1px solid #dfe2e5"></div>
<div class="a" style="left:282px;top:216.5px;width:1px;height:21.0px;background:#dfe2e5"></div>
<svg class="a" style="left:5px;top:220.0px;" width="13" height="13" viewBox="0 0 13 13"><circle cx="6.5" cy="6.5" r="6" fill="#6fa3d8"/><path d="M5 3.5L9 6.5 5 9.5z" fill="#fff"/></svg>
<div class="ln" style="left:21px;top:219.0px;color:#111">p2</div>
<div class="ln" style="left:288px;top:219.0px;color:#111">Large ggplot2::ggplot (16.6 MB)</div>
<div class="a" style="left:0;top:237.5px;width:1036px;height:20.5px;background:#f2f6f7;border-bottom:1px solid #d4dadd"></div>
<div class="ln" style="left:4px;top:238.0px;color:#111">Functions</div>
</div>
<div class="a" style="left:1896px;top:149px;width:15px;height:258px;background:#fafafa"></div>
<svg class="a" style="left:1898px;top:156px;" width="10" height="8" viewBox="0 0 10 8"><path d="M0.5 7.5L5 0.5 9.5 7.5z" fill="#8a8a8a"/></svg>
<div class="a" style="left:1899px;top:270px;width:9px;height:111px;border-radius:5px;background:#a8a8a8"></div>
<svg class="a" style="left:1898px;top:397px;" width="10" height="8" viewBox="0 0 10 8"><path d="M0.5 0.5L5 7.5 9.5 0.5z" fill="#8a8a8a"/></svg>
<div class="a" style="left:859px;top:416px;width:1053px;height:617px;border:1px solid #d4dadd;border-radius:4px 4px 0 0;background:#f2f6f7"></div>
<div class="a" style="left:860px;top:417px;width:1051px;height:23px;background:#e5e7e9;border-radius:4px 4px 0 0"></div>
<div class="a" style="left:860px;top:439px;width:1051px;height:1px;background:#d4dadd"></div>
<div class="a" style="left:860px;top:417px;width:42px;height:22px;background:#e8e9eb;border:1px solid #d4dadd;border-bottom:none;border-radius:4px 4px 0 0"></div>
<div class="t" style="left:869px;top:424px;font-size:10.3px;font-weight:bold;color:#111">Files</div>
<div class="a" style="left:901px;top:417px;width:46px;height:23px;background:#f2f6f7;border:1px solid #d4dadd;border-bottom:none;border-radius:4px 4px 0 0"></div>
<div class="t" style="left:911px;top:424px;font-size:10.6px;font-weight:bold;color:#111">Plots</div>
<div class="a" style="left:946px;top:417px;width:67px;height:22px;background:#e8e9eb;border:1px solid #d4dadd;border-bottom:none;border-radius:4px 4px 0 0"></div>
<div class="t" style="left:955px;top:424px;font-size:10.45px;font-weight:bold;color:#111">Packages</div>
<div class="a" style="left:1012px;top:417px;width:44px;height:22px;background:#e8e9eb;border:1px solid #d4dadd;border-bottom:none;border-radius:4px 4px 0 0"></div>
<div class="t" style="left:1022px;top:424px;font-size:11.0px;font-weight:bold;color:#111">Help</div>
<div class="a" style="left:1055px;top:417px;width:55px;height:22px;background:#e8e9eb;border:1px solid #d4dadd;border-bottom:none;border-radius:4px 4px 0 0"></div>
<div class="t" style="left:1065px;top:424px;font-size:11.1px;font-weight:bold;color:#111">Viewer</div>
<div class="a" style="left:1109px;top:417px;width:86px;height:22px;background:#e8e9eb;border:1px solid #d4dadd;border-bottom:none;border-radius:4px 4px 0 0"></div>
<div class="t" style="left:1120px;top:424px;font-size:10.75px;font-weight:bold;color:#111">Presentation</div>
<div class="a" style="left:1870px;top:430px;width:14px;height:6px;border:1.5px solid #7d858b;border-top-width:2.5px;border-radius:2px 2px 0 0;background:#fff"></div>
<div class="a" style="left:1888px;top:424px;width:14px;height:12px;border:1.2px solid #7d858b;border-top-width:2.5px;border-radius:2px 2px 0 0"></div>
<div class="a" style="left:860px;top:461px;width:1051px;height:1px;background:#d4dadd"></div>
<svg class="a" style="left:866px;top:444px;" width="17" height="14" viewBox="0 0 17 14"><path d="M1 7L8 1v3.5h8v5H8V13z" fill="#8fbde6" stroke="#7aaedc" stroke-width="0.6"/></svg>
<svg class="a" style="left:891px;top:444px;" width="17" height="14" viewBox="0 0 17 14"><path d="M16 7L9 1v3.5H1v5h8V13z" fill="#d8e8f5" stroke="#c8dcee" stroke-width="0.6"/></svg>
<div class="sep" style="left:915px;top:444px;height:15px"></div>
<svg class="a" style="left:922px;top:443px;" width="16" height="17" viewBox="0 0 16 17"><circle cx="10" cy="6" r="5" fill="#eef3f5" stroke="#7b8a93" stroke-width="1"/><path d="M10 3v6M7 6h6" stroke="#1aa575" stroke-width="2"/><path d="M6.5 9.5L1 15" stroke="#a46a2a" stroke-width="2.5"/></svg>
<div class="t" style="left:943px;top:447.8px;font-size:10.9px;color:#111">Zoom</div>
<div class="sep" style="left:982px;top:444px;height:15px"></div>
<svg class="a" style="left:988px;top:444px;" width="18" height="15" viewBox="0 0 18 15"><rect x="4.5" y="0.5" width="13" height="13" fill="#e9f4fb" stroke="#777" stroke-width="0.8"/><path d="M5 5q4-2 12 0V10H5z" fill="#6cb3e8"/><path d="M5 9q6-3 12 1v3H5z" fill="#e5b42a"/><path d="M0 6h7" stroke="#555" stroke-width="1.4"/></svg>
<div class="t" style="left:1009px;top:447.8px;font-size:10.6px;color:#111">Export</div>
<div class="car" style="left:1047px;top:450px;border-top-color:#333"></div>
<div class="sep" style="left:1060px;top:444px;height:15px"></div>
<svg class="a" style="left:1066px;top:443px;" width="19" height="16" viewBox="0 0 19 16"><rect x="7.5" y="4.5" width="10" height="11" fill="#fff" stroke="#ccc"/><circle cx="6" cy="6" r="5.5" fill="#d4312a"/><path d="M3.8 3.8l4.4 4.4M8.2 3.8L3.8 8.2" stroke="#fff" stroke-width="1.5"/></svg>
<div class="sep" style="left:1092px;top:444px;height:15px"></div>
<svg class="a" style="left:1098px;top:442px;" width="17" height="17" viewBox="0 0 17 17"><path d="M16 1L9 8" stroke="#b23b2e" stroke-width="1.8"/><path d="M5 7l5 4-3 5-6-3z" fill="#d9a441" stroke="#b8862c" stroke-width="0.8"/></svg>
<svg class="a" style="left:1805px;top:444px;" width="18" height="15" viewBox="0 0 18 15"><path d="M1 7.5H4.5" stroke="#1d8fd8" stroke-width="2.4"/><path d="M4.5 7.5A5 5 0 0 1 13.5 4.5" fill="none" stroke="#1d8fd8" stroke-width="2.4"/><path d="M4.5 10.5A5 5 0 0 0 13.5 7.5H17" fill="none" stroke="#1d8fd8" stroke-width="2.4"/><circle cx="9" cy="7.5" r="2.3" fill="#1d8fd8"/></svg>
<div class="t" style="left:1826px;top:447.8px;font-size:10.7px;color:#111">Publish</div>
<div class="car" style="left:1870px;top:450px;border-top-color:#333"></div>
<div class="sep" style="left:1885px;top:444px;height:15px"></div>
<svg class="a" style="left:1890px;top:443px;" width="16" height="16" viewBox="0 0 16 16"><path d="M13 8A5.5 5.5 0 1 1 9 2.7" fill="none" stroke="#c5d3e3" stroke-width="2.4"/><path d="M8 0l5 3-4 3z" fill="#c5d3e3"/></svg>
<div class="a" style="left:860px;top:462px;width:1051px;height:570px;background:#fff"></div>
<div class="t" style="left:1005.5px;top:468.3px;font-size:27.55px;font-weight:bold;color:#000">DISPUESTOS A MUDARSE: ANÁLISIS POR EDAD</div>
<div class="t" style="left:1005px;top:503px;font-size:14.6px;color:#4d4d4d">Tamaño: volumen de personas | Color: promedio de edad en la ubicación</div>
<svg class="a" style="left:860px;top:462px" width="1051" height="570"><path d="M202.5,138.7 L202.7,134.2 L203.5,131.0 L206.0,127.7 L208.0,126.0 L209.8,123.3 L210.7,121.0 L212.4,118.4 L215.0,116.0 L216.7,112.8 L219.9,111.6 L221.8,108.0 L225.0,106.0 L228.2,105.6 L231.1,103.4 L234.9,101.6 L237.6,100.8 L240.0,100.0 L242.8,99.1 L246.5,100.2 L249.6,99.5 L253.9,99.0 L257.0,99.0 L260.4,97.7 L262.9,97.4 L267.0,97.4 L270.1,98.9 L272.2,100.9 L275.2,102.0 L278.0,104.0 L281.5,105.1 L283.5,105.6 L287.0,106.9 L290.0,107.0 L293.4,106.8 L296.9,106.7 L298.9,108.1 L301.4,107.8 L305.0,108.0 L307.5,108.6 L312.1,108.8 L315.7,108.7 L318.7,109.5 L321.8,109.6 L325.0,110.0 L328.9,111.0 L331.6,110.6 L334.2,110.9 L338.6,111.6 L342.2,110.4 L345.0,111.0 L348.0,111.5 L350.5,111.3 L353.9,110.8 L356.9,112.1 L360.2,111.4 L364.0,112.0 L366.8,113.3 L369.2,113.2 L373.1,114.7 L376.6,115.3 L378.6,115.2 L382.0,116.0 L384.9,116.5 L389.2,115.0 L390.9,115.0 L394.2,115.3 L398.0,114.7 L401.0,115.0 L403.4,114.1 L407.3,113.7 L411.7,113.2 L414.2,112.4 L417.7,110.6 L421.4,111.2 L424.0,110.0 L427.9,111.5 L430.2,111.8 L432.9,113.2 L436.0,113.2 L440.0,115.0 L442.7,115.4 L446.1,116.2 L448.7,117.4 L452.1,118.8 L456.0,120.0 L458.6,120.9 L463.2,119.9 L466.1,120.5 L470.0,121.0 L473.1,119.6 L477.3,120.5 L480.0,119.0 L482.6,117.6 L486.4,117.2 L490.6,116.4 L493.4,116.3 L495.0,120.0 L497.6,121.6 L502.0,120.9 L505.4,121.4 L508.8,123.0 L508.2,127.4 L508.2,130.4 L506.9,133.5 L509.3,132.3 L512.6,131.6 L515.0,133.2 L518.7,134.3 L521.4,134.4 L525.3,136.9 L528.4,137.7 L531.3,138.6 L533.8,139.3 L536.2,140.3 L539.3,140.4 L541.6,141.8 L544.8,143.4 L549.0,144.0 L551.0,145.0 L554.7,147.3 L557.6,147.7 L559.2,148.9 L562.6,150.8 L565.0,149.5 L568.8,150.0 L572.2,148.5 L574.8,148.3 L576.8,147.3 L581.3,146.8 L584.0,145.5 L585.9,145.3 L589.5,144.0 L592.2,145.2 L596.3,145.1 L598.3,146.8 L601.9,146.1 L603.8,146.7 L608.2,148.6 L609.8,149.3 L614.3,149.6 L616.4,150.0 L617.3,153.9 L618.1,156.7 L620.0,161.4 L624.1,162.0 L626.5,162.8 L629.6,163.0 L633.6,162.1 L635.8,162.6 L639.5,163.3 L641.4,167.0 L644.0,166.8 L647.1,166.1 L649.9,166.5 L653.4,165.3 L656.7,165.0 L660.2,165.5 L663.2,165.3 L666.6,164.3 L669.9,163.2 L673.1,163.2 L675.6,164.1 L679.8,163.3 L681.9,164.6 L685.6,166.1 L687.6,167.4 L690.7,169.2 L693.3,170.0 L689.7,172.6 L687.5,174.9 L687.8,177.8 L689.4,181.6 L689.8,185.4 L690.4,188.3 L688.7,190.4 L685.8,192.8 L683.2,195.4 L680.7,197.4 L678.4,200.3 L676.0,201.8 L673.7,204.5 L671.5,205.4 L668.2,208.7 L666.1,209.2 L662.2,211.8 L659.5,213.5 L656.9,216.3 L655.0,218.0 L652.4,220.0 L648.1,220.9 L645.9,221.1 L643.2,223.8 L638.9,225.1 L636.1,225.5 L634.0,227.3 L630.0,228.0 L625.4,229.2 L622.0,230.6 L619.4,231.9 L616.2,233.4 L614.5,234.5 L611.6,236.8 L608.0,238.2 L606.4,240.1 L602.8,242.5 L601.4,244.1 L597.6,244.4 L594.8,246.9 L593.0,248.0 L597.0,251.7 L593.9,252.6 L591.5,255.5 L589.6,255.9 L585.7,258.6 L583.7,259.4 L582.1,262.3 L579.6,263.7 L578.9,267.0 L576.1,270.5 L575.4,272.8 L572.8,275.4 L571.0,278.0 L570.0,279.6 L568.4,282.5 L566.1,285.4 L563.3,286.1 L561.4,288.4 L559.0,291.0 L556.8,293.2 L555.2,296.1 L554.2,299.1 L553.5,302.0 L551.5,304.6 L550.0,308.0 L548.9,310.5 L547.9,313.8 L547.9,318.1 L546.1,321.3 L546.6,324.0 L545.0,328.0 L547.9,330.4 L549.7,333.6 L551.8,335.5 L554.7,338.9 L556.4,341.1 L559.0,343.0 L562.2,344.4 L564.4,345.0 L566.6,345.8 L569.4,348.0 L573.0,348.7 L570.6,353.3 L568.2,355.2 L566.0,358.8 L565.4,361.0 L562.4,362.7 L560.5,365.5 L558.3,368.0 L556.5,371.4 L555.0,373.0 L554.0,375.6 L550.8,378.8 L549.0,380.2 L546.6,382.8 L545.6,385.5 L543.2,388.0 L541.0,390.1 L540.0,393.0 L538.5,395.9 L537.6,398.4 L537.2,401.9 L537.0,405.5 L536.0,408.6 L533.4,409.6 L530.3,410.7 L526.6,410.5 L524.6,410.9 L521.1,412.5 L517.6,413.0 L514.2,415.4 L513.2,416.9 L510.4,419.0 L506.7,420.3 L504.8,422.7 L502.8,424.5 L499.9,426.5 L497.5,427.9 L494.6,429.4 L492.5,431.5 L490.6,435.0 L488.9,438.8 L488.1,441.4 L486.5,444.4 L484.6,446.2 L483.0,450.0 L480.4,451.0 L476.7,451.2 L473.8,451.0 L470.8,451.9 L466.4,452.5 L464.4,453.0 L461.3,455.0 L457.7,454.7 L454.2,454.2 L450.7,454.5 L447.8,454.1 L443.8,453.6 L440.9,453.2 L436.9,454.0 L434.8,454.4 L431.4,454.3 L427.3,455.2 L425.0,456.0 L422.3,455.1 L419.3,453.2 L416.0,452.3 L412.9,450.5 L410.0,450.0 L407.2,449.0 L403.8,449.8 L398.5,448.4 L395.8,448.0 L393.2,449.8 L389.4,449.6 L385.8,451.8 L382.6,452.1 L380.0,453.0 L376.2,453.3 L373.7,453.6 L372.3,455.6 L369.9,458.9 L367.8,461.9 L364.4,464.9 L362.7,466.8 L360.8,468.5 L358.1,472.0 L357.1,474.2 L354.7,476.9 L353.1,480.3 L351.6,482.3 L348.5,485.0 L347.8,486.1 L345.0,489.0 L342.8,487.5 L339.8,484.9 L335.9,483.3 L334.1,481.8 L330.0,479.6 L327.3,477.9 L325.8,473.8 L324.4,471.9 L323.7,468.7 L323.0,464.6 L321.0,461.6 L320.0,458.8 L318.3,457.6 L317.7,454.8 L315.7,452.3 L314.0,449.0 L312.6,446.9 L310.0,443.7 L307.8,442.2 L305.7,440.4 L302.6,437.1 L301.6,435.0 L298.5,433.2 L296.0,431.7 L294.2,429.0 L291.7,428.2 L287.8,428.0 L284.4,427.8 L280.3,427.1 L277.1,428.1 L274.3,427.0 L273.8,423.0 L274.1,420.9 L272.8,415.8 L271.9,412.2 L272.0,409.4 L273.2,405.7 L274.5,403.1 L276.6,401.2 L278.4,397.4 L279.3,394.7 L281.0,391.7 L281.8,388.0 L282.2,384.4 L284.8,380.8 L285.0,378.0 L283.4,375.0 L282.5,371.0 L279.9,367.8 L278.7,365.0 L279.1,361.7 L280.7,359.1 L281.1,354.4 L281.0,352.0 L281.9,349.7 L285.2,346.6 L286.4,343.1 L287.8,342.1 L289.8,338.7 L288.1,336.4 L286.1,332.4 L283.0,330.0 L281.2,326.4 L280.9,324.3 L280.5,321.4 L278.9,318.5 L277.5,315.1 L276.5,312.0 L273.5,309.6 L271.6,307.0 L269.9,303.3 L273.5,302.6 L275.9,302.1 L280.1,302.5 L282.5,301.0 L286.5,301.5 L289.8,301.0 L291.2,297.3 L293.3,293.6 L294.4,291.2 L296.4,288.0 L295.6,285.5 L293.8,282.4 L291.0,279.1 L289.8,276.8 L291.8,275.0 L293.3,272.4 L292.7,268.1 L293.7,266.3 L294.2,262.6 L295.3,260.8 L295.2,256.2 L296.0,253.9 L297.3,250.5 L297.6,248.0 L297.2,244.7 L295.7,239.9 L294.7,236.7 L297.1,233.8 L298.5,231.1 L299.5,229.0 L301.7,227.9 L304.5,226.6 L307.6,223.6 L309.8,222.5 L313.0,221.0 L315.2,219.2 L316.2,215.6 L318.2,214.1 L320.0,209.8 L322.6,208.0 L319.6,205.3 L318.9,203.7 L316.3,201.4 L314.5,197.7 L310.9,196.4 L309.7,192.2 L307.0,190.6 L306.6,187.5 L305.3,184.5 L304.2,180.9 L303.7,178.7 L303.4,176.0 L301.0,176.3 L297.8,177.5 L293.8,179.0 L295.4,182.6 L297.6,185.0 L295.6,186.7 L291.7,188.7 L290.0,190.6 L286.7,192.2 L283.2,192.1 L281.4,192.4 L277.4,194.7 L274.5,195.0 L271.9,193.9 L267.5,193.6 L266.0,193.7 L262.5,194.5 L259.0,193.5 L255.7,193.6 L253.8,194.7 L249.6,195.4 L246.7,195.1 L244.0,196.0 L246.0,190.6 L241.9,190.5 L240.3,189.8 L237.2,188.2 L232.7,188.5 L230.0,188.0 L227.8,187.2 L223.8,184.2 L220.9,183.0 L218.8,180.8 L215.5,180.1 L212.0,178.0 L211.4,175.6 L209.9,172.0 L208.2,169.2 L207.9,165.8 L205.7,164.2 L204.7,160.1 L204.0,158.0 L203.2,155.1 L203.7,152.9 L204.7,149.9 L204.0,146.0 L202.8,141.6 L202.5,138.7Z" fill="#fafafa" stroke="#d4d4d4" stroke-width="0.8"/><path d="M672.0,293.3 L674.2,292.7 L677.7,292.1 L679.8,291.5 L682.9,291.2 L685.8,290.9 L688.2,289.9 L690.3,291.2 L692.4,293.1 L694.0,294.9 L696.2,296.4 L697.5,298.2 L699.7,300.2 L697.8,302.8 L696.9,304.2 L695.2,307.1 L693.9,308.3 L692.8,310.9 L691.5,312.3 L689.4,315.3 L688.4,317.5 L686.0,318.9 L684.6,320.8 L683.6,323.3 L681.4,322.9 L678.6,322.2 L675.8,321.9 L672.3,321.8 L669.8,321.0 L668.2,319.2 L665.6,318.5 L663.0,316.9 L660.8,315.4 L658.8,314.5 L657.1,312.8 L654.8,311.8 L655.4,309.3 L657.3,306.8 L658.0,304.5 L659.7,302.6 L660.5,300.2 L662.3,298.3 L665.0,297.5 L667.6,295.6 L669.3,294.9 L672.0,293.3Z" fill="#fafafa" stroke="#d4d4d4" stroke-width="0.8"/><path d="M712.4,286.4 L714.9,285.3 L717.4,285.2 L720.0,283.9 L722.8,283.0 L724.7,285.0 L727.4,287.7 L728.9,288.8 L731.4,290.9 L733.2,293.3 L729.7,296.8 L726.3,296.1 L724.1,294.9 L721.3,293.8 L718.6,291.8 L715.9,291.0 L713.6,288.8 L712.4,286.4Z" fill="#fafafa" stroke="#d4d4d4" stroke-width="0.8"/><path d="M612.0,339.4 L614.5,338.7 L616.2,337.2 L618.8,336.0 L620.9,334.5 L623.7,334.2 L626.0,332.5 L627.1,337.1 L624.5,338.6 L623.2,340.8 L620.4,341.3 L619.2,343.9 L616.5,344.3 L614.4,346.4 L613.7,342.8 L612.0,339.4Z" fill="#fafafa" stroke="#d4d4d4" stroke-width="0.8"/><path d="M619.0,351.0 L621.8,352.3 L624.1,352.9 L626.0,354.4 L623.8,354.9 L621.0,356.0 L619.9,353.9 L619.0,351.0Z" fill="#fafafa" stroke="#d4d4d4" stroke-width="0.8"/><path d="M257.0,99.0 L257.4,101.7 L256.0,105.3 L256.4,108.5 L255.4,111.4 L256.3,115.8 L254.8,118.4 L255.9,120.7 L255.8,124.1 L255.0,128.0 L254.9,131.2 L254.7,133.8 L254.1,137.3 L253.8,140.6 L253.6,143.2 L253.4,146.4 L254.5,149.1 L257.3,150.9 L259.7,154.3 L261.1,155.7 L263.1,158.0 L264.4,161.1 L267.0,163.7 L269.4,163.9 L273.4,163.5 L276.7,163.9 L280.1,165.5 L282.9,164.5 L286.0,165.6" fill="none" stroke="#d9d9d9" stroke-width="0.8"/><path d="M204.0,158.0 L207.3,157.5 L211.3,156.8 L214.4,158.1 L217.4,157.6 L219.7,157.6 L223.5,157.3 L227.5,155.6 L230.0,156.0 L233.4,155.6 L235.1,153.3 L239.2,151.8 L242.4,150.8 L245.2,149.4 L247.6,149.6 L249.9,147.2 L253.4,146.4" fill="none" stroke="#d9d9d9" stroke-width="0.8"/><path d="M230.0,188.0 L231.4,184.8 L232.0,181.7 L233.7,180.2 L236.0,177.3 L236.5,174.2 L237.9,170.9 L240.0,168.0 L243.2,167.3 L246.7,167.1 L249.1,167.3 L251.3,167.0 L255.2,165.4 L258.5,164.7 L261.9,164.8 L263.7,164.7 L267.0,163.7" fill="none" stroke="#d9d9d9" stroke-width="0.8"/><path d="M278.0,104.0 L280.6,106.1 L283.8,108.5 L286.0,112.0 L288.2,114.3 L289.6,118.3 L291.1,120.4 L292.3,122.0 L293.4,124.9 L296.2,128.2 L297.6,131.0 L300.7,133.3 L303.1,133.6 L307.1,134.8 L309.0,136.9 L313.0,138.7 L315.6,138.7 L319.1,139.4 L323.0,139.0 L326.4,139.7 L328.8,140.8 L332.3,139.7 L336.0,140.6 L338.6,140.3 L343.2,140.0 L345.7,138.5 L348.3,138.7 L352.5,137.6 L356.0,137.2 L359.0,136.8 L362.9,136.5 L364.7,136.0 L367.5,134.6 L371.2,133.3 L374.5,133.0 L377.5,134.5 L382.0,135.0 L383.7,137.0 L388.0,138.2 L389.2,140.9 L392.3,142.9 L395.5,143.9 L397.5,146.4 L400.1,145.1 L403.3,144.5 L405.9,145.0 L410.7,144.4 L412.8,144.4 L417.5,143.4 L421.0,143.2 L424.0,143.0 L426.3,144.0 L429.0,145.7 L432.0,148.7 L435.4,150.7 L438.2,151.4 L440.6,153.4 L443.3,155.3 L446.9,155.3 L449.1,155.6 L453.5,154.8 L456.5,154.4 L458.5,154.8 L462.5,156.1 L465.6,155.0 L468.3,155.3 L471.4,156.9 L472.7,159.9 L475.9,161.4 L478.4,163.8 L480.5,165.5 L483.3,167.5 L485.3,169.1 L488.0,170.3 L489.8,172.8 L492.0,175.2 L495.2,176.4" fill="none" stroke="#d9d9d9" stroke-width="0.8"/><path d="M286.0,165.6 L288.3,163.3 L291.1,163.6 L294.4,160.8 L297.6,160.0 L295.5,155.8 L295.4,153.6 L293.8,150.0 L294.8,147.3 L294.3,143.8 L295.5,141.1 L296.9,138.0 L296.2,134.8 L297.6,131.0" fill="none" stroke="#d9d9d9" stroke-width="0.8"/><path d="M297.6,171.4 L301.2,174.1 L302.6,174.7 L305.5,176.3 L309.0,179.0 L312.6,179.6 L315.2,179.6 L318.2,178.6 L320.3,178.3 L324.5,178.5 L326.7,178.9 L329.1,178.6 L332.6,179.4 L336.0,179.0 L338.6,180.0 L342.5,181.6 L345.1,183.1 L346.5,184.0 L350.1,186.0 L353.0,186.8 L355.6,185.1 L358.7,182.2 L362.2,179.9 L364.9,178.0 L366.3,176.0 L370.0,174.5" fill="none" stroke="#d9d9d9" stroke-width="0.8"/><path d="M374.0,138.0 L373.8,142.0 L371.8,144.3 L372.0,148.0 L370.8,150.7 L370.4,154.4 L370.0,157.0 L369.6,161.3 L369.6,163.5 L370.4,167.5 L369.3,171.2 L370.0,174.5 L366.4,176.6 L364.7,178.2 L361.7,179.0 L358.5,180.6 L356.5,181.7 L353.0,184.0 L350.6,182.6 L346.2,182.6 L344.3,182.5 L340.2,182.7 L336.8,181.4 L334.2,181.4 L331.4,180.7 L327.6,179.6 L324.1,180.0 L321.8,179.3 L318.4,178.4 L314.4,178.0 L312.2,178.0 L307.6,177.6 L305.6,176.9 L301.0,176.8 L298.6,177.5 L294.2,176.0 L291.5,176.4 L288.2,173.7 L285.8,171.1 L282.6,168.8 L280.0,167.0" fill="none" stroke="#d9d9d9" stroke-width="0.8"/><path d="M395.3,138.0 L396.4,141.7 L395.1,145.4 L395.4,147.6 L397.3,151.7 L397.1,154.3 L396.4,158.0 L397.2,161.0 L398.0,163.2 L400.1,165.6 L401.6,169.6 L403.7,171.8 L405.1,174.4 L405.8,177.4 L407.8,180.3 L410.3,182.5 L411.2,185.7 L412.6,188.0 L410.1,190.4 L408.2,194.4 L405.9,197.0 L403.0,199.5 L403.6,203.7 L403.3,207.1 L403.0,211.0" fill="none" stroke="#d9d9d9" stroke-width="0.8"/><path d="M280.0,191.8 L282.7,192.4 L285.4,192.4 L289.7,193.3 L292.5,192.9 L295.2,193.6 L298.6,193.9 L301.8,195.2 L304.0,195.1 L308.1,195.0 L310.7,195.6 L312.2,199.1 L312.9,201.0 L314.7,204.1 L317.7,206.4 L318.4,209.0 L314.8,211.1 L312.7,213.3 L309.7,215.1 L307.4,216.8 L303.7,219.5 L301.0,220.6 L303.6,221.3 L307.0,221.9 L309.6,222.6 L313.1,221.4 L316.1,222.4 L318.7,222.8 L322.6,223.7 L325.5,223.3 L328.4,224.5 L332.0,224.5 L335.9,224.9 L337.6,225.8 L341.0,225.1 L343.6,226.5 L347.9,226.6 L350.3,226.9 L352.9,228.0 L356.2,227.8 L360.1,228.5 L362.6,228.3 L366.0,228.3 L369.6,228.3 L373.6,229.1 L377.2,229.2 L380.0,230.0" fill="none" stroke="#d9d9d9" stroke-width="0.8"/><path d="M403.0,211.0 L405.9,210.6 L409.0,210.4 L411.3,211.4 L414.9,210.5 L418.4,211.0 L420.7,209.4 L423.6,208.2 L426.7,206.1 L429.9,205.5 L431.8,203.3 L433.3,201.3 L437.0,198.7 L437.9,196.2 L441.0,192.2 L442.2,191.4 L445.3,188.0 L448.5,186.6 L450.3,185.4 L453.4,185.6 L456.5,183.5 L460.4,183.7 L462.0,182.9 L465.6,181.8 L468.3,180.3 L471.9,180.7 L475.4,180.4 L477.7,179.8 L481.6,179.6 L484.7,179.6 L488.2,178.2 L491.4,178.4 L493.8,176.8 L497.2,175.7 L500.0,174.9 L502.9,174.5 L505.9,174.2 L508.7,172.6 L509.6,170.6 L512.2,167.6 L514.3,165.5 L515.5,162.2 L518.3,159.0 L519.5,157.4 L520.2,154.8 L523.1,152.8 L524.2,150.4 L526.3,146.9 L528.8,143.5 L529.8,141.8" fill="none" stroke="#d9d9d9" stroke-width="0.8"/><path d="M430.0,220.6 L427.8,223.1 L424.5,225.7 L422.0,227.3 L419.7,230.0 L416.6,231.7 L414.5,234.0 L412.7,236.7 L411.8,238.8 L410.1,241.5 L407.8,243.9 L406.2,247.7 L404.8,249.9 L402.5,251.6 L400.8,254.7 L399.7,257.6 L397.0,260.1 L396.9,262.3 L393.7,264.4 L391.9,266.8 L391.9,270.1 L389.5,272.5" fill="none" stroke="#d9d9d9" stroke-width="0.8"/><path d="M381.8,232.0 L383.5,235.6 L385.3,238.3 L386.2,241.4 L387.7,244.3 L389.1,246.7 L390.4,250.2 L391.5,253.3 L391.6,255.8 L390.3,258.9 L391.0,263.6 L390.4,265.9 L390.4,269.8 L389.5,272.5" fill="none" stroke="#d9d9d9" stroke-width="0.8"/><path d="M362.6,228.3 L362.7,231.3 L362.2,235.1 L362.3,238.6 L362.9,242.9 L362.6,245.6 L359.6,247.9 L357.4,249.3 L356.7,252.3 L354.7,254.2 L350.9,256.3 L349.8,259.4 L348.3,260.8 L345.3,263.0 L341.9,262.5 L339.0,263.0 L334.8,262.9 L331.3,264.4 L328.2,265.1 L324.8,265.2 L322.3,264.8 L318.6,265.1 L316.5,266.7 L313.5,267.7 L309.2,269.9 L307.3,271.2 L304.2,271.0 L301.0,273.3 L297.6,274.9 L294.1,276.1 L291.5,276.4" fill="none" stroke="#d9d9d9" stroke-width="0.8"/><path d="M353.0,280.2 L356.4,278.7 L358.2,279.2 L362.7,277.5 L364.8,278.0 L367.6,277.6 L371.2,275.6 L374.1,275.8 L377.2,275.4 L379.7,275.0 L383.2,274.0 L386.7,273.0 L389.5,272.5 L392.3,273.7 L396.3,274.3 L398.6,274.0 L400.7,275.9 L404.8,276.3 L407.1,276.5 L411.3,277.6 L413.6,277.3 L416.3,278.9 L419.2,279.2 L422.6,280.2 L425.9,279.8 L427.5,280.4 L431.2,281.6 L434.9,282.8 L436.5,283.3 L440.9,284.0 L443.3,284.0 L445.0,281.0 L447.2,279.5 L448.5,277.1 L449.5,273.1 L451.5,271.8 L453.0,268.7 L455.2,267.2 L459.2,264.4 L461.3,263.2 L463.8,260.5 L466.1,259.5 L469.8,257.1 L472.0,255.2 L474.5,256.7 L479.0,256.7 L481.8,258.8 L485.6,259.1 L488.1,260.2 L491.4,261.0 L493.0,262.6 L495.1,265.6 L497.6,267.5 L499.8,269.6 L501.4,270.8 L505.1,273.6 L505.6,276.2 L509.0,277.4 L510.6,280.2 L513.3,281.9 L515.8,283.2 L518.3,286.0" fill="none" stroke="#d9d9d9" stroke-width="0.8"/><path d="M430.0,220.6 L432.4,221.8 L437.2,221.1 L440.0,221.0 L443.6,221.6 L447.2,222.4 L450.3,223.1 L453.0,222.5 L455.7,222.9 L458.8,224.4 L461.8,225.4 L465.8,228.2 L468.8,229.6 L472.0,230.0 L475.8,230.2 L478.4,231.8 L480.6,233.8 L484.0,234.1 L487.8,235.8 L490.9,235.8 L493.6,236.4 L497.6,238.9 L499.4,238.2 L503.0,240.0 L505.4,238.8 L509.5,238.8 L512.2,236.3 L515.0,236.5 L517.6,236.0 L519.5,233.5 L523.6,234.0 L526.3,231.8 L529.0,231.7 L531.0,229.9 L534.2,228.6 L537.5,228.3" fill="none" stroke="#d9d9d9" stroke-width="0.8"/><path d="M491.4,178.4 L491.6,181.1 L491.5,184.3 L492.5,187.4 L492.9,191.0 L491.9,195.6 L492.5,198.9 L493.3,201.4 L492.0,205.0 L488.8,207.1 L486.8,210.8 L486.2,213.2 L483.6,215.5 L481.8,218.7 L479.9,221.5 L477.1,223.7 L473.9,226.4 L472.0,230.0" fill="none" stroke="#d9d9d9" stroke-width="0.8"/><path d="M443.3,284.0 L444.3,287.2 L443.9,290.9 L444.7,293.2 L445.1,296.0 L447.0,299.3 L446.4,302.7 L447.3,306.5 L447.5,309.8 L448.8,312.0" fill="none" stroke="#d9d9d9" stroke-width="0.8"/><path d="M353.0,280.2 L352.9,284.1 L354.6,286.1 L354.9,289.4 L355.2,292.5 L356.0,297.1 L356.9,299.4 L359.0,302.9 L358.5,304.6 L361.1,306.9 L361.9,310.1 L363.5,312.4 L364.4,315.7 L365.0,318.8" fill="none" stroke="#d9d9d9" stroke-width="0.8"/><path d="M503.0,240.0 L502.4,242.6 L503.6,247.0 L502.4,250.4 L503.7,253.5 L503.0,257.5 L504.5,259.7 L505.1,263.7 L507.4,265.5 L507.6,268.2 L509.9,271.7 L510.7,274.1 L512.7,277.8 L514.4,280.4 L514.6,282.4 L516.5,286.0" fill="none" stroke="#d9d9d9" stroke-width="0.8"/><path d="M474.0,142.0 L473.8,138.8 L473.3,135.2 L472.8,132.7 L472.3,130.7 L471.1,126.1 L471.3,124.0 L470.0,121.0" fill="none" stroke="#d9d9d9" stroke-width="0.8"/><path d="M443.0,155.6 L443.7,158.5 L442.4,162.8 L442.8,164.9 L442.8,169.0 L442.1,172.1 L442.9,175.4 L443.0,178.7 L445.5,179.1 L449.9,179.4 L452.1,179.1 L455.4,179.2 L458.0,179.4 L462.7,178.7 L465.1,178.8 L468.3,177.8 L472.2,178.2 L473.9,178.0 L477.2,179.3 L480.0,178.0 L484.3,178.2 L486.2,178.9 L490.4,178.7 L493.4,178.7 L493.8,181.1 L494.1,185.3 L492.6,187.4 L493.4,191.2 L493.0,193.6 L493.2,196.8 L493.6,201.2 L493.4,203.7 L490.9,206.3 L490.0,208.0 L488.2,211.9 L485.5,213.4 L484.4,216.1 L481.7,219.3 L480.0,221.0 L477.4,220.8 L473.3,221.0 L470.5,222.2 L468.0,222.2 L464.9,222.3 L460.4,221.8 L458.9,222.7 L454.5,221.9 L452.1,221.9 L448.8,221.5 L445.5,222.4 L441.6,221.9 L440.2,223.1 L437.0,223.0 L433.7,223.6 L430.0,223.0" fill="none" stroke="#d9d9d9" stroke-width="0.8"/><path d="M530.0,146.0 L530.7,148.4 L530.3,152.0 L530.3,155.2 L530.1,159.6 L530.2,161.6 L530.0,165.1 L530.8,168.1 L529.6,171.9 L529.3,175.0 L530.8,178.1 L529.6,181.2 L530.0,184.5 L532.2,186.3 L533.6,188.8 L536.1,191.7 L538.2,193.9 L540.0,196.9 L543.5,199.5 L545.0,201.8 L547.6,204.2 L549.5,206.5 L552.5,208.4 L555.3,210.4 L557.2,212.2 L559.6,214.9 L562.6,217.0 L565.5,218.4 L567.9,219.1 L572.5,220.1 L575.0,221.8 L578.0,223.0" fill="none" stroke="#d9d9d9" stroke-width="0.8"/><path d="M589.5,144.0 L589.8,148.0 L590.5,150.7 L591.0,152.5 L593.0,156.3 L593.0,159.5 L591.8,162.4 L592.0,166.2 L591.0,168.4 L592.1,172.4 L590.2,174.8 L590.1,178.6 L590.1,182.0 L589.5,184.5 L588.2,187.4 L586.1,190.7 L584.2,193.1 L582.3,196.4 L580.7,198.2 L578.0,201.8 L578.7,203.9 L578.5,208.0 L578.0,211.7 L578.1,213.8 L578.5,217.6 L578.2,219.8 L578.0,223.0 L575.9,226.1 L574.4,229.0 L572.0,232.5 L572.2,235.7 L572.6,238.4 L573.7,242.4 L573.6,244.8 L574.0,248.0 L575.9,250.5 L578.2,253.8 L581.4,255.8 L583.7,259.4" fill="none" stroke="#d9d9d9" stroke-width="0.8"/><path d="M631.8,169.0 L632.3,171.8 L631.9,175.9 L631.9,177.8 L630.7,182.2 L629.7,183.8 L630.4,187.7 L630.8,191.4 L629.8,194.0 L627.5,197.2 L625.1,198.7 L623.1,200.8 L620.1,203.5 L618.0,205.6 L614.8,207.6 L612.5,208.0 L608.5,208.9 L606.1,210.4 L603.5,212.2 L601.3,212.7 L597.4,214.1 L595.5,214.8 L591.7,216.8 L588.2,217.1 L586.7,219.2 L582.9,219.1 L580.0,221.0" fill="none" stroke="#d9d9d9" stroke-width="0.8"/><path d="M641.4,171.0 L644.9,173.3 L647.5,175.7 L650.3,176.6 L651.8,178.3 L655.1,180.7 L657.3,182.0 L660.6,184.5 L662.7,187.2 L664.2,190.3 L666.6,191.1 L668.1,194.9 L669.8,197.2 L671.2,199.0 L674.0,201.8" fill="none" stroke="#d9d9d9" stroke-width="0.8"/><path d="M541.5,221.0 L539.0,222.3 L535.6,222.8 L532.3,224.5 L528.8,225.9 L526.2,227.6 L523.2,227.7 L519.3,228.4 L517.3,229.5 L513.1,230.8 L510.7,232.5 L507.7,231.9 L504.8,230.8 L500.7,228.2 L498.9,227.6 L495.7,226.5 L491.7,225.2 L488.5,225.2 L486.3,223.0 L483.0,221.9 L480.0,221.0" fill="none" stroke="#d9d9d9" stroke-width="0.8"/><path d="M572.0,232.5 L569.1,235.4 L567.9,237.7 L565.5,239.2 L563.0,240.3 L562.2,244.0 L558.9,246.2 L557.7,247.3 L555.0,249.8 L554.3,253.7 L553.3,256.7 L552.0,258.7 L552.0,261.4 L550.4,265.6 L549.8,268.5 L549.0,271.0 L545.6,271.8 L542.8,273.2 L541.0,274.7 L537.3,275.8 L534.3,277.6 L531.1,278.4 L527.6,281.1 L525.1,281.4 L521.9,282.9 L519.0,283.8 L516.5,286.0" fill="none" stroke="#d9d9d9" stroke-width="0.8"/><path d="M503.0,240.0 L503.3,243.2 L502.4,247.4 L502.3,250.1 L503.6,253.3 L503.0,257.5" fill="none" stroke="#d9d9d9" stroke-width="0.8"/><path d="M464.6,265.0 L467.3,263.3 L470.8,259.7 L472.9,258.4 L476.0,255.6 L478.7,257.4 L481.3,258.3 L484.7,258.0 L487.5,258.7 L490.9,259.9 L493.4,261.3" fill="none" stroke="#d9d9d9" stroke-width="0.8"/><path d="M506.0,238.0 L505.7,241.2 L503.7,243.7 L503.2,246.7 L502.6,249.6 L501.0,253.5 L499.5,257.0 L498.7,259.8 L498.0,262.3 L496.9,265.7 L499.0,267.7 L500.9,271.9 L503.5,274.3 L505.4,276.9 L508.4,279.5 L510.9,281.1 L513.6,282.0 L516.3,283.9 L518.8,286.4 L522.2,287.6 L524.5,286.1 L528.3,285.4 L531.0,284.2 L532.3,281.8 L534.9,281.2 L538.4,279.5 L540.5,276.7 L541.8,274.7 L544.1,271.3 L546.2,269.0 L547.6,266.1 L548.4,264.8 L551.3,261.9 L551.9,258.1 L554.5,256.4 L557.0,255.1 L560.3,254.7 L562.9,253.8 L567.1,252.8 L570.5,252.7 L573.0,251.8" fill="none" stroke="#d9d9d9" stroke-width="0.8"/><path d="M483.0,256.4 L480.3,257.2 L476.7,259.3 L473.5,259.4 L471.3,262.1 L467.3,262.0 L465.2,264.3 L460.7,265.0 L457.8,267.2 L455.4,268.0 L453.1,271.3 L452.4,272.4 L450.5,275.6 L448.9,278.9 L446.3,280.2 L445.8,283.4 L444.0,286.5 L441.5,288.7 L443.1,292.5 L444.0,294.9 L444.1,298.5 L446.0,301.4 L448.0,303.8 L448.9,306.9 L449.9,311.4 L450.7,314.0" fill="none" stroke="#d9d9d9" stroke-width="0.8"/><path d="M430.0,316.4 L432.7,316.5 L437.2,316.6 L439.6,315.9 L441.9,316.1 L445.7,315.9 L448.7,315.7 L452.6,316.7 L455.4,316.4 L457.9,317.2 L461.3,318.9 L465.0,320.1 L466.8,322.3 L469.5,323.1 L472.8,324.9 L476.0,325.6 L479.1,325.1 L481.4,324.1 L485.2,322.8 L488.5,322.5 L490.3,320.6 L493.7,319.6 L496.2,318.8 L499.5,318.6 L502.9,316.6 L506.0,316.4 L508.5,314.5 L511.4,312.0 L513.6,309.9 L518.1,309.3 L520.0,307.0 L522.3,307.5 L526.9,307.3 L528.3,307.3 L531.9,306.8 L535.1,306.6 L538.8,307.9 L541.2,308.5 L544.3,307.4 L546.5,307.2 L550.0,308.0" fill="none" stroke="#d9d9d9" stroke-width="0.8"/><path d="M515.3,334.8 L516.7,337.6 L520.5,339.1 L521.6,342.0 L525.1,344.8 L526.8,346.4 L529.4,346.6 L533.8,346.2 L536.1,344.8 L540.3,344.7 L542.7,344.8 L545.9,345.0 L548.9,343.2 L552.7,343.9 L556.4,343.7 L559.0,343.0" fill="none" stroke="#d9d9d9" stroke-width="0.8"/><path d="M453.0,341.7 L455.1,345.8 L455.8,348.2 L456.6,351.1 L458.7,354.0 L460.0,358.0 L457.3,358.1 L453.9,360.2 L450.3,359.2 L447.9,360.2 L445.4,360.5 L442.6,362.7 L439.5,362.6 L435.6,363.7 L433.0,364.0 L430.0,364.8" fill="none" stroke="#d9d9d9" stroke-width="0.8"/><path d="M469.0,376.3 L472.2,378.5 L476.0,381.0 L479.2,379.8 L482.5,376.9 L484.3,375.6 L487.6,373.7 L489.8,371.5 L492.9,370.4 L497.0,369.5 L499.0,367.0 L502.2,366.1 L505.0,363.7 L507.3,360.9 L509.6,360.1 L511.5,358.2 L515.3,356.3 L517.3,354.2 L519.3,353.5 L522.2,351.0" fill="none" stroke="#d9d9d9" stroke-width="0.8"/><path d="M457.7,399.4 L459.6,397.0 L463.5,395.5 L465.2,394.0 L468.5,392.0 L471.5,390.0 L474.6,391.5 L478.1,392.6 L480.5,393.6 L485.1,395.7 L487.6,397.0 L486.9,401.1 L487.2,403.2 L487.7,407.0 L487.6,411.0 L487.1,414.5 L487.6,417.8 L488.7,420.7 L491.3,422.8 L492.7,425.7 L494.6,429.4" fill="none" stroke="#d9d9d9" stroke-width="0.8"/><path d="M300.8,327.6 L303.9,329.2 L307.2,329.8 L310.8,329.6 L314.4,331.7 L315.9,332.8 L319.6,332.5 L323.0,334.0 L327.0,333.2 L329.8,331.5 L332.9,330.5 L335.1,330.1 L337.8,329.6 L341.3,328.2 L345.0,327.6 L348.2,326.2 L351.4,325.3 L354.2,323.9 L357.2,323.2 L358.7,321.8 L361.9,320.5 L365.0,318.8 L368.3,318.0 L370.3,315.9 L374.4,315.5 L377.4,312.5 L380.0,312.0 L383.3,311.3 L386.2,312.5 L388.5,312.8 L392.6,311.6 L394.8,311.9 L399.1,312.1 L400.8,311.1 L404.6,312.0 L406.8,314.4 L409.8,315.8 L412.9,317.8 L416.0,318.7 L419.8,321.2 L422.0,323.0 L425.3,322.3 L428.8,319.7 L430.6,318.7 L433.9,318.8 L437.4,316.1 L439.3,316.2 L443.2,314.3 L445.8,312.6 L448.8,312.0 L452.6,313.1 L455.8,314.8 L457.5,315.5 L460.9,317.9 L464.7,317.6 L467.1,319.5 L470.9,321.0 L474.1,321.1 L477.2,320.7 L479.8,321.1 L484.0,321.0 L486.6,318.7 L489.7,318.9 L491.8,316.0 L495.9,314.7 L498.0,313.7 L500.9,312.3 L504.3,311.6 L508.0,308.4 L510.0,307.8" fill="none" stroke="#d9d9d9" stroke-width="0.8"/><path d="M278.7,365.0 L281.3,367.5 L284.3,369.5 L286.3,371.2 L288.3,372.6 L291.5,375.7 L294.2,377.3 L295.5,379.5 L298.8,381.0 L300.8,383.0 L304.1,382.7 L306.9,382.8 L309.1,382.7 L312.6,383.9 L315.9,382.8 L318.4,382.5 L321.7,382.3 L324.1,383.7 L327.9,382.9 L331.1,382.6 L334.0,383.0 L335.6,379.6 L338.0,377.5 L340.9,375.3 L343.5,372.3 L345.6,370.2 L347.0,367.4 L349.0,364.9 L352.6,364.4 L355.0,362.1 L357.9,360.4 L360.0,357.7 L364.2,355.4 L365.8,353.1 L369.0,352.0 L371.1,353.3 L374.7,355.0 L376.9,356.7 L379.9,359.7 L382.7,360.3 L385.5,363.4 L387.9,363.6 L391.0,366.8 L392.8,367.2 L395.8,369.6 L398.4,369.1 L402.9,368.7 L406.2,367.3 L408.3,367.6 L412.1,366.4 L415.3,365.7 L417.4,365.2 L420.6,365.0 L424.3,364.2 L428.0,363.2 L431.0,363.0 L434.0,362.3 L438.0,363.5 L441.2,362.8 L443.6,364.2 L446.2,363.3 L449.0,363.6 L453.2,363.7 L456.4,364.5 L459.0,365.0 L462.0,365.0 L463.6,368.3 L465.2,370.7 L466.9,373.6 L468.4,377.5 L470.0,379.7 L471.0,383.0 L474.1,381.6 L476.1,378.1 L478.8,377.1 L480.7,373.2 L484.0,371.8 L487.2,371.8 L491.0,371.0 L494.6,370.5 L497.5,370.0 L499.4,369.8 L502.7,370.2 L506.8,369.3 L510.0,369.6 L512.5,366.7 L512.9,363.7 L515.7,362.4 L516.4,358.1 L519.2,355.9 L521.3,353.7 L522.2,351.0" fill="none" stroke="#d9d9d9" stroke-width="0.8"/><path d="M373.7,334.0 L373.2,336.7 L372.7,339.9 L371.0,343.7 L369.9,346.4 L369.0,349.3 L369.0,352.0" fill="none" stroke="#d9d9d9" stroke-width="0.8"/><path d="M292.0,391.7 L293.3,395.1 L294.1,397.2 L296.2,400.6 L298.7,402.8 L298.8,404.8 L300.8,408.0 L300.4,411.0 L300.3,413.8 L301.3,417.8 L300.4,421.6 L300.3,424.0 L300.8,427.0 L301.8,430.4 L304.8,432.1 L306.2,435.8 L307.0,437.7 L309.0,441.5 L310.1,443.8 L312.5,446.2 L314.0,449.0" fill="none" stroke="#d9d9d9" stroke-width="0.8"/><path d="M347.0,367.4 L347.4,371.1 L347.1,374.2 L347.6,377.0 L348.9,379.0 L349.2,383.5 L348.4,384.8 L348.4,389.5 L349.4,391.7 L350.1,395.3 L351.9,397.8 L353.4,399.6 L356.1,402.3 L357.0,406.7 L359.3,409.4 L360.5,411.6 L363.6,413.3 L364.4,417.3 L367.4,418.5 L369.3,421.4 L371.4,423.7 L373.7,427.0 L373.6,431.1 L374.9,434.2 L375.4,436.7 L376.2,439.9 L377.1,443.6 L377.8,446.9 L379.2,449.1 L380.0,453.0" fill="none" stroke="#d9d9d9" stroke-width="0.8"/><path d="M334.0,447.0 L335.9,449.6 L339.2,451.9 L340.1,455.5 L343.5,457.7 L344.6,459.3 L347.2,462.4" fill="none" stroke="#d9d9d9" stroke-width="0.8"/><path d="M395.8,369.6 L396.0,372.0 L396.2,375.9 L397.4,379.2 L398.0,381.3 L399.1,385.7 L399.5,388.6 L400.0,391.7 L399.6,395.5 L399.3,398.0 L397.7,400.2 L397.1,404.4 L396.3,406.2 L395.8,409.4 L400.0,409.4 L403.1,408.4 L407.4,407.7 L409.9,409.0 L412.5,408.0 L416.0,406.9 L418.9,406.3 L423.3,407.1 L426.6,405.4 L429.5,405.5 L432.6,405.5 L435.6,405.0 L438.2,404.7 L440.5,403.2 L444.9,401.7 L447.4,401.4 L449.6,399.6 L453.0,398.3 L456.6,396.8 L459.7,395.5 L462.5,394.5 L465.9,392.7 L468.7,391.7" fill="none" stroke="#d9d9d9" stroke-width="0.8"/><path d="M471.0,391.7 L472.2,394.7 L472.4,397.7 L473.5,401.2 L474.8,403.8 L475.9,406.3 L476.3,408.6 L478.5,412.2 L478.8,415.1 L479.7,418.0 L477.6,419.8 L473.9,423.1 L471.8,425.0 L469.8,427.7 L467.3,428.4 L464.0,431.5 L463.5,435.3 L464.0,437.1 L462.5,440.5 L462.1,443.9 L463.1,447.3 L462.2,449.7 L462.0,453.6" fill="none" stroke="#d9d9d9" stroke-width="0.8"/><path d="M484.0,371.8 L482.5,375.5 L481.8,377.4 L480.1,380.9 L479.3,382.5 L477.9,385.8 L476.3,388.4 L475.0,391.7 L477.0,393.6 L479.3,395.3 L481.3,398.5 L483.3,400.0 L486.7,402.4 L488.6,405.0 L491.0,405.9 L494.6,407.0 L496.9,409.8 L498.8,410.4 L502.5,412.1 L504.4,412.4 L507.2,414.4 L510.0,416.0" fill="none" stroke="#d9d9d9" stroke-width="0.8"/><circle cx="236" cy="117" r="27" fill="rgb(236,137,88)" opacity="0.85"/><circle cx="335.79999999999995" cy="117" r="28" fill="rgb(216,96,110)" opacity="0.85"/><circle cx="449.20000000000005" cy="122.29999999999995" r="22.2" fill="rgb(249,170,62)" opacity="0.85"/><circle cx="224" cy="173.70000000000005" r="26" fill="rgb(248,166,63)" opacity="0.85"/><circle cx="379.5999999999999" cy="203.89999999999998" r="22.8" fill="rgb(245,215,52)" opacity="0.85"/><circle cx="419.4000000000001" cy="266.1" r="28.4" fill="rgb(236,135,88)" opacity="0.85"/><circle cx="648" cy="216.89999999999998" r="29.1" fill="rgb(246,208,62)" opacity="0.85"/><circle cx="549" cy="313.70000000000005" r="29" fill="rgb(246,158,75)" opacity="0.85"/><circle cx="667.5" cy="309.6" r="13.5" fill="rgb(183,56,145)" opacity="0.85"/><circle cx="545.5" cy="371.20000000000005" r="24.5" fill="rgb(234,122,97)" opacity="0.85"/><circle cx="520.3" cy="389.4" r="17.3" fill="rgb(237,243,29)" opacity="0.85"/><circle cx="331" cy="418.79999999999995" r="28.9" fill="rgb(241,144,78)" opacity="0.85"/><circle cx="423.4000000000001" cy="430.20000000000005" r="28.2" fill="rgb(232,123,97)" opacity="0.85"/><circle cx="391.4000000000001" cy="453.4" r="22.9" fill="rgb(243,149,78)" opacity="0.85"/><circle cx="342.9000000000001" cy="238.29999999999995" r="5.8" fill="rgb(12,12,139)" opacity="0.85"/><text x="232" y="112.29999999999995" font-family="Liberation Sans" font-size="9" fill="#000">A Coruñ</text><text x="308.29999999999995" y="132.79999999999995" font-family="Liberation Sans" font-size="9" fill="#000">Oviedo</text><text x="423.5" y="137.70000000000005" font-family="Liberation Sans" font-size="9" fill="#000">Bilbao</text><text x="202.70000000000005" y="189" font-family="Liberation Sans" font-size="9" fill="#000">Vigo</text><text x="348.5" y="218" font-family="Liberation Sans" font-size="9" fill="#000">Valladolid</text><text x="392.79999999999995" y="280.70000000000005" font-family="Liberation Sans" font-size="9" fill="#000">Madrid</text><text x="614.2" y="231.5" font-family="Liberation Sans" font-size="9" fill="#000">Barcelona</text><text x="544.5" y="308.70000000000005" font-family="Liberation Sans" font-size="9" fill="#000">Valencia</text><text x="640.9000000000001" y="323.70000000000005" font-family="Liberation Sans" font-size="9" fill="#000">Palma</text><text x="541" y="364.70000000000005" font-family="Liberation Sans" font-size="9" fill="#000">Alicante</text><text x="518" y="383.9" font-family="Liberation Sans" font-size="9" fill="#000">Murcia</text><text x="330.5999999999999" y="413.70000000000005" font-family="Liberation Sans" font-size="9" fill="#000">Sevilla</text><text x="393.5" y="444.5" font-family="Liberation Sans" font-size="9" fill="#000">Granada</text><text x="366.29999999999995" y="467.79999999999995" font-family="Liberation Sans" font-size="9" fill="#000">Málag</text><text x="331" y="234.79999999999995" font-family="Liberation Sans" font-size="9" fill="#000">Salamanca</text><text x="810" y="154" font-family="Liberation Sans" font-size="14.5" fill="#000">Nº Personas</text><circle cx="843.3" cy="179.29999999999995" r="13.1" fill="#333"/><text x="884.4000000000001" y="185" font-family="Liberation Sans" font-size="11.7" fill="#000">3</text><circle cx="843.3" cy="223.79999999999995" r="20.5" fill="#333"/><text x="884.4000000000001" y="229.39999999999998" font-family="Liberation Sans" font-size="11.7" fill="#000">10</text><circle cx="843.3" cy="285.29999999999995" r="25.4" fill="#333"/><text x="884.4000000000001" y="290.4" font-family="Liberation Sans" font-size="11.7" fill="#000">30</text><text x="810" y="362" font-family="Liberation Sans" font-size="14.4" fill="#000">Edad Media</text><defs><linearGradient id="pl" x1="0" y1="1" x2="0" y2="0"><stop offset="0" stop-color="#0d0887"/><stop offset="0.1" stop-color="#41049d"/><stop offset="0.2" stop-color="#6a00a8"/><stop offset="0.3" stop-color="#8f0da4"/><stop offset="0.4" stop-color="#b12a90"/><stop offset="0.5" stop-color="#cc4778"/><stop offset="0.6" stop-color="#e16462"/><stop offset="0.7" stop-color="#f2844b"/><stop offset="0.8" stop-color="#fca636"/><stop offset="0.9" stop-color="#fcce25"/><stop offset="1" stop-color="#f0f921"/></linearGradient></defs><rect x="810" y="371" width="23" height="115" fill="url(#pl)"/><path d="M810 384.20000000000005h5M828 384.20000000000005h5" stroke="#fff" stroke-width="1"/><text x="840" y="390.00000000000006" font-family="Liberation Sans" font-size="11.7" fill="#000">45</text><path d="M810 408h5M828 408h5" stroke="#fff" stroke-width="1"/><text x="840" y="413.8" font-family="Liberation Sans" font-size="11.7" fill="#000">40</text><path d="M810 432.20000000000005h5M828 432.20000000000005h5" stroke="#fff" stroke-width="1"/><text x="840" y="438.00000000000006" font-family="Liberation Sans" font-size="11.7" fill="#000">35</text><path d="M810 456.29999999999995h5M828 456.29999999999995h5" stroke="#fff" stroke-width="1"/><text x="840" y="462.09999999999997" font-family="Liberation Sans" font-size="11.7" fill="#000">30</text><path d="M810 480.4h5M828 480.4h5" stroke="#fff" stroke-width="1"/><text x="840" y="486.2" font-family="Liberation Sans" font-size="11.7" fill="#000">25</text></svg>
<div class="a" style="left:0;top:1032px;width:1920px;height:9px;background:#1c1c1c"></div>
<div class="a" style="left:32px;top:1037px;width:14px;height:14px;border-radius:50%;background:#d4382c"></div>
<div class="a" style="left:879px;top:1038px;width:11px;height:11px;border-radius:50%;background:#3ab5ec"></div>
<div class="a" style="left:1318px;top:1038px;width:11px;height:11px;border-radius:50%;background:#3d9c4f"></div>
<div class="a" style="left:1385px;top:1039px;width:36px;height:4px;border-radius:3px;background:#333"></div>
</body></html>
